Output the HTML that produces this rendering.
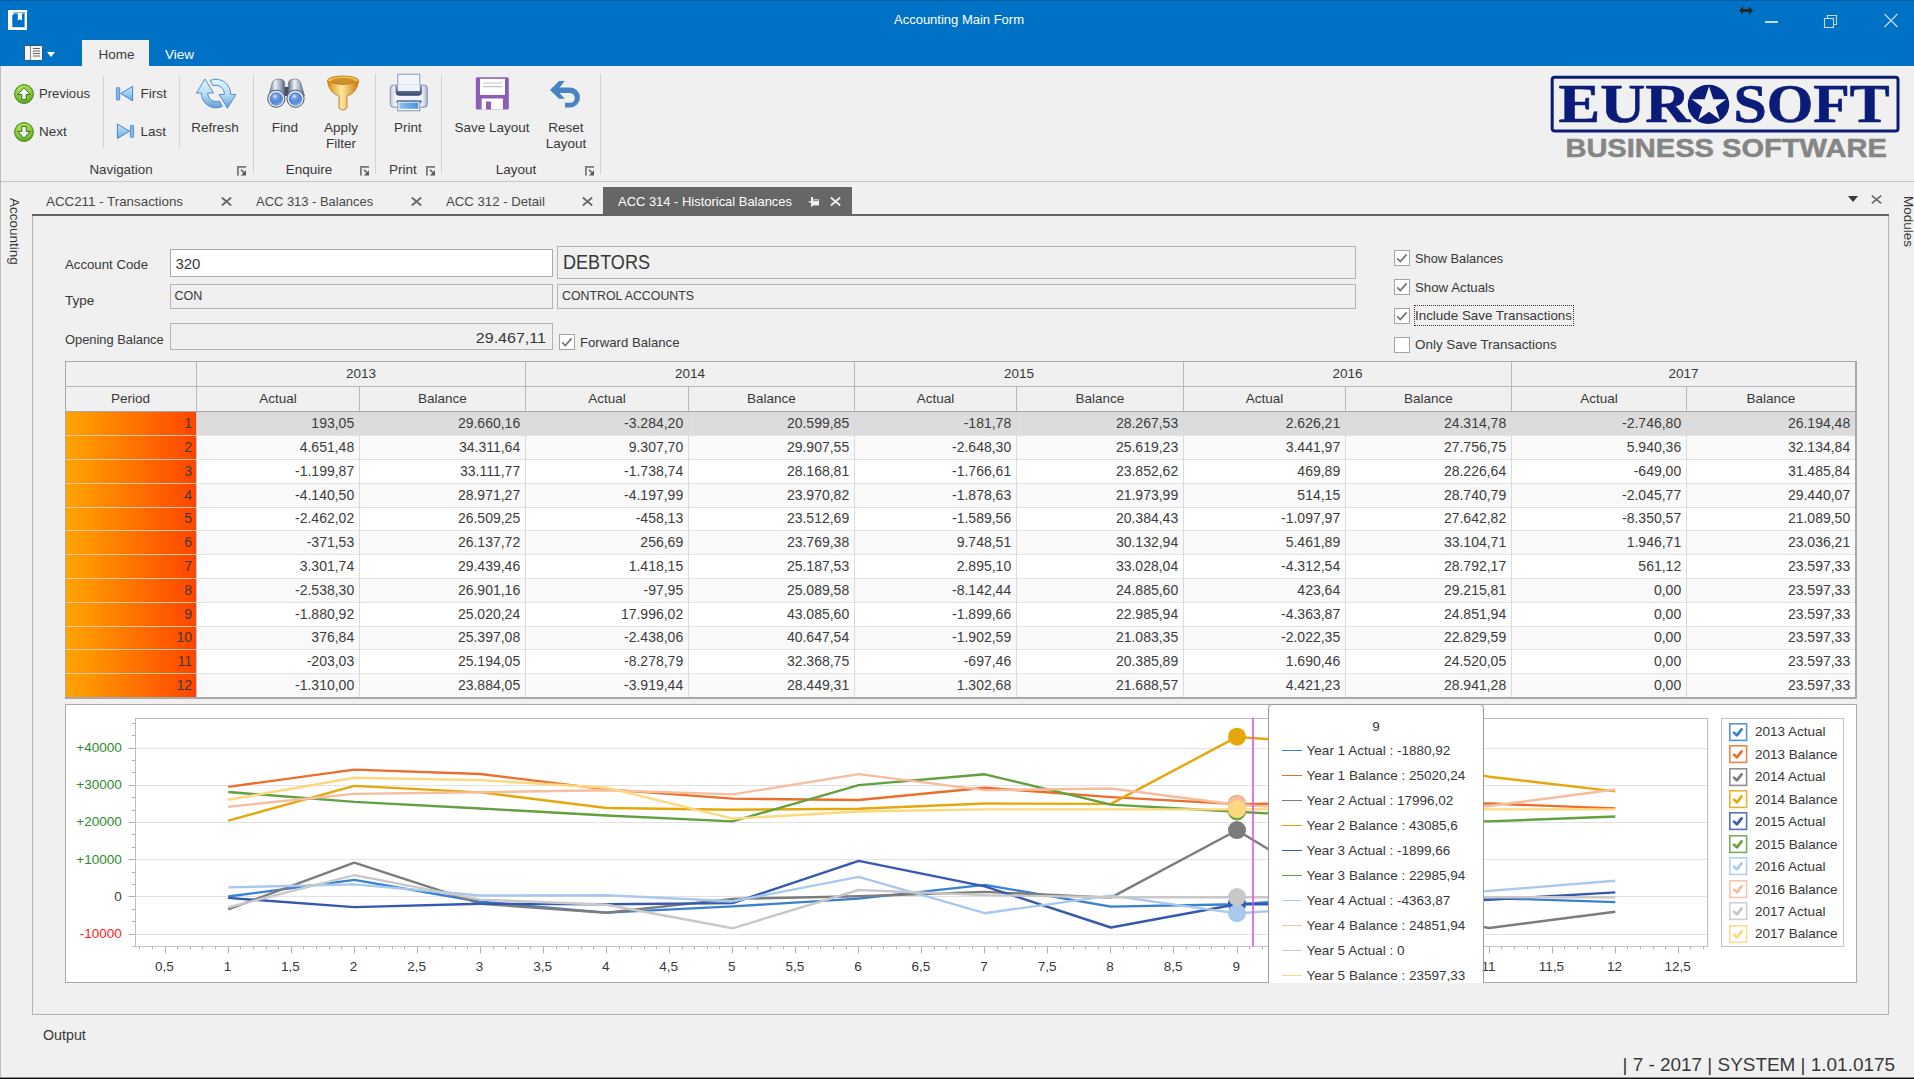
<!DOCTYPE html>
<html><head><meta charset="utf-8"><style>
html,body{margin:0;padding:0;width:1914px;height:1079px;overflow:hidden;background:#f0f0f0;font-family:"Liberation Sans", sans-serif;}
.t{position:absolute;white-space:nowrap;}
svg{overflow:visible}
</style></head><body>
<div style="position:absolute;left:0px;top:0px;width:1914px;height:66px;background:#0072c6"></div>
<div style="position:absolute;left:0px;top:0px;width:1914px;height:1px;background:#005ea6"></div>
<svg style="position:absolute;left:0px;top:0px" width="40" height="40" viewBox="0 0 40 40">
<rect x="8" y="10" width="19.2" height="2.2" fill="#fff"/>
<rect x="8" y="10" width="4.3" height="20" fill="#fff"/>
<rect x="24.6" y="10" width="2.4" height="20" fill="#fff"/>
<rect x="8" y="27.2" width="19" height="2.8" fill="#fff"/>
<rect x="12.3" y="12.2" width="12.3" height="1.7" fill="#8dbde8"/>
<rect x="10" y="12.2" width="3.5" height="2.6" fill="#fff"/>
<path d="M17.8 13 H22 V20.6 L19.9 19.3 L17.8 20.6 Z" fill="#fff"/>
</svg>
<div class="t" style="left:758.80px;top:13.17px;width:400px;font-size:13.5px;line-height:13.5px;color:#ffffff;text-align:center;transform:scaleX(0.9625);transform-origin:center center;">Accounting Main Form</div>
<svg style="position:absolute;left:1738px;top:5px" width="16" height="11" viewBox="0 0 16 11">
<path d="M1 5.5 L5 1.5 V4 H11 V1.5 L15 5.5 L11 9.5 V7 H5 V9.5 Z" fill="#262626"/></svg>
<div style="position:absolute;left:1765px;top:21px;width:13px;height:1.5px;background:#c6d7ea"></div>
<svg style="position:absolute;left:1823px;top:14px" width="16" height="15" viewBox="0 0 16 15">
<rect x="1.5" y="4.5" width="9" height="9" fill="none" stroke="#c6d7ea" stroke-width="1.1"/>
<path d="M4.5 4.5 V1.5 H13.5 V10.5 H10.5" fill="none" stroke="#c6d7ea" stroke-width="1.1"/></svg>
<svg style="position:absolute;left:1883px;top:13px" width="16" height="15" viewBox="0 0 16 15">
<path d="M1.5 1 L14.5 14 M14.5 1 L1.5 14" stroke="#c6d7ea" stroke-width="1.2"/></svg>
<svg style="position:absolute;left:23px;top:44px" width="34" height="18" viewBox="0 0 34 18">
<rect x="1.5" y="1.5" width="18" height="15" rx="1" fill="#f4f4f4" stroke="#1f3f66" stroke-width="0.8"/>
<line x1="7.5" y1="2" x2="7.5" y2="16" stroke="#888" stroke-width="1"/>
<path d="M10 4.5 H17 M10 7 H17 M10 9.5 H17 M10 12 H17" stroke="#666" stroke-width="1"/>
<path d="M24 8 L32 8 L28 13 Z" fill="#ffffff"/></svg>
<div style="position:absolute;left:82px;top:40px;width:67px;height:26px;background:#f0f0f0"></div>
<div class="t" style="left:98.40px;top:47.87px;width:400px;font-size:13.5px;line-height:13.5px;color:#3c3c3c;text-align:left;">Home</div>
<div class="t" style="left:165.00px;top:47.87px;width:400px;font-size:13.5px;line-height:13.5px;color:#ffffff;text-align:left;">View</div>
<div style="position:absolute;left:0px;top:66px;width:1914px;height:116px;background:#f0f0f0"></div>
<div style="position:absolute;left:0px;top:181px;width:1914px;height:1px;background:#c6c6c6"></div>
<div style="position:absolute;left:0px;top:66px;width:1px;height:1013px;background:#bdbdbd"></div>
<div style="position:absolute;left:103px;top:76px;width:1px;height:72px;background:#d4d4d4"></div>
<div style="position:absolute;left:179px;top:76px;width:1px;height:72px;background:#d4d4d4"></div>
<div style="position:absolute;left:253px;top:74px;width:1px;height:100px;background:#d4d4d4"></div>
<div style="position:absolute;left:375px;top:74px;width:1px;height:100px;background:#d4d4d4"></div>
<div style="position:absolute;left:441px;top:74px;width:1px;height:100px;background:#d4d4d4"></div>
<div style="position:absolute;left:600px;top:74px;width:1px;height:100px;background:#d4d4d4"></div>
<svg style="position:absolute;left:14px;top:84px" width="20" height="20" viewBox="0 0 20 20">
<defs><radialGradient id="gg1484" cx="45%" cy="30%" r="75%"><stop offset="0" stop-color="#c0ea62"/><stop offset="0.6" stop-color="#86c83a"/><stop offset="1" stop-color="#4e9a1c"/></radialGradient></defs>
<circle cx="10" cy="10" r="9.4" fill="url(#gg1484)" stroke="#3f8a18" stroke-width="1"/>
<path d="M10 3.6 L16.2 10.6 H12.3 V15.6 H7.7 V10.6 H3.8 Z" fill="#f2f6fb" stroke="#2f7010" stroke-width="1" stroke-linejoin="round"/></svg>
<svg style="position:absolute;left:14px;top:122px" width="20" height="20" viewBox="0 0 20 20">
<defs><radialGradient id="gg14122" cx="45%" cy="30%" r="75%"><stop offset="0" stop-color="#c0ea62"/><stop offset="0.6" stop-color="#86c83a"/><stop offset="1" stop-color="#4e9a1c"/></radialGradient></defs>
<circle cx="10" cy="10" r="9.4" fill="url(#gg14122)" stroke="#3f8a18" stroke-width="1"/>
<path d="M10 16.4 L16.2 9.4 H12.3 V4.4 H7.7 V9.4 H3.8 Z" fill="#f2f6fb" stroke="#2f7010" stroke-width="1" stroke-linejoin="round"/></svg>
<div class="t" style="left:39.00px;top:87.17px;width:400px;font-size:13.5px;line-height:13.5px;color:#383838;text-align:left;transform:scaleX(0.9709);transform-origin:left center;">Previous</div>
<div class="t" style="left:39.00px;top:124.57px;width:400px;font-size:13.5px;line-height:13.5px;color:#383838;text-align:left;">Next</div>
<svg style="position:absolute;left:110px;top:80px" width="30" height="64" viewBox="110 80 30 64">
<defs><linearGradient id="fl" x1="0" y1="0" x2="0" y2="1"><stop offset="0" stop-color="#c8e6fa"/><stop offset="1" stop-color="#6aaee8"/></linearGradient></defs>
<rect x="116.4" y="87.6" width="3.3" height="12.4" rx="0.8" fill="#7ab8ee" stroke="#3d78c0" stroke-width="0.7"/>
<path d="M132.6 86.3 V100.8 L120.6 93.5 Z" fill="url(#fl)" stroke="#3d78c0" stroke-width="0.9" stroke-linejoin="round"/>
<rect x="130.3" y="125.3" width="3.3" height="12.1" rx="0.8" fill="#7ab8ee" stroke="#3d78c0" stroke-width="0.7"/>
<path d="M117.4 124 V138.4 L129.5 131.2 Z" fill="url(#fl)" stroke="#3d78c0" stroke-width="0.9" stroke-linejoin="round"/>
</svg>
<div class="t" style="left:140.60px;top:87.17px;width:400px;font-size:13.5px;line-height:13.5px;color:#383838;text-align:left;">First</div>
<div class="t" style="left:140.60px;top:124.57px;width:400px;font-size:13.5px;line-height:13.5px;color:#383838;text-align:left;">Last</div>
<svg style="position:absolute;left:190px;top:72px" width="52" height="42" viewBox="0 0 52 42">
<defs><linearGradient id="rg" x1="0" y1="0" x2="0" y2="1"><stop offset="0" stop-color="#e2f6fc"/><stop offset="0.55" stop-color="#b4dcf2"/><stop offset="1" stop-color="#5d9fdc"/></linearGradient></defs>
<path d="M15 7 L23.5 21 L17.8 21 A8.4 8.4 0 0 0 29.3 29 L32.3 34.4 A14.7 14.7 0 0 1 11.3 21 L6.4 21 Z" fill="url(#rg)" stroke="#4a80c4" stroke-width="0.9" stroke-linejoin="round"/>
<path d="M20.2 8.4 A14.7 14.7 0 0 1 40.6 22.4 L45.9 22.6 L37.4 36.2 L29.2 22.6 L34.3 22.4 A8.4 8.4 0 0 0 23 13.8 Z" fill="url(#rg)" stroke="#4a80c4" stroke-width="0.9" stroke-linejoin="round"/>
</svg>
<div class="t" style="left:165.30px;top:121.17px;width:100px;font-size:13.5px;line-height:13.5px;color:#383838;text-align:center;transform:scaleX(1.0046);transform-origin:center center;">Refresh</div>
<div class="t" style="left:61.30px;top:163.27px;width:120px;font-size:13.5px;line-height:13.5px;color:#383838;text-align:center;transform:scaleX(0.9906);transform-origin:center center;">Navigation</div>
<svg style="position:absolute;left:237px;top:166px" width="10" height="10" viewBox="0 0 10 10">
<rect x="0" y="0" width="9" height="1.8" fill="#7a7a7a"/><rect x="0" y="0" width="1.8" height="9.6" fill="#7a7a7a"/>
<path d="M4 3.7 L6.8 6.5" stroke="#5a5a5a" stroke-width="1.6"/>
<path d="M9 4.2 V9.5 H3.8 Z" fill="#5a5a5a"/></svg>
<svg style="position:absolute;left:360px;top:166px" width="10" height="10" viewBox="0 0 10 10">
<rect x="0" y="0" width="9" height="1.8" fill="#7a7a7a"/><rect x="0" y="0" width="1.8" height="9.6" fill="#7a7a7a"/>
<path d="M4 3.7 L6.8 6.5" stroke="#5a5a5a" stroke-width="1.6"/>
<path d="M9 4.2 V9.5 H3.8 Z" fill="#5a5a5a"/></svg>
<svg style="position:absolute;left:426px;top:166px" width="10" height="10" viewBox="0 0 10 10">
<rect x="0" y="0" width="9" height="1.8" fill="#7a7a7a"/><rect x="0" y="0" width="1.8" height="9.6" fill="#7a7a7a"/>
<path d="M4 3.7 L6.8 6.5" stroke="#5a5a5a" stroke-width="1.6"/>
<path d="M9 4.2 V9.5 H3.8 Z" fill="#5a5a5a"/></svg>
<svg style="position:absolute;left:585px;top:166px" width="10" height="10" viewBox="0 0 10 10">
<rect x="0" y="0" width="9" height="1.8" fill="#7a7a7a"/><rect x="0" y="0" width="1.8" height="9.6" fill="#7a7a7a"/>
<path d="M4 3.7 L6.8 6.5" stroke="#5a5a5a" stroke-width="1.6"/>
<path d="M9 4.2 V9.5 H3.8 Z" fill="#5a5a5a"/></svg>
<svg style="position:absolute;left:262px;top:72px" width="50" height="40" viewBox="0 0 50 40">
<defs><linearGradient id="bn" x1="0" y1="0" x2="1" y2="0"><stop offset="0" stop-color="#56647c"/><stop offset="0.4" stop-color="#eef2f7"/><stop offset="0.75" stop-color="#9aa6b8"/><stop offset="1" stop-color="#4d5a70"/></linearGradient>
<radialGradient id="lens" cx="40%" cy="30%" r="75%"><stop offset="0" stop-color="#f4f0ff"/><stop offset="0.25" stop-color="#7aa2e8"/><stop offset="0.7" stop-color="#4a86d8"/><stop offset="1" stop-color="#9ccfee"/></radialGradient></defs>
<rect x="22" y="15" width="5" height="9" fill="#3e4a62"/>
<path d="M6.5 24 L10.5 10 Q12 7 16.5 7 Q21.5 7 22.5 10 L23.2 24 Z" fill="url(#bn)" stroke="#5a667c" stroke-width="0.6"/>
<path d="M25.8 24 L26.5 10 Q27.5 7 32.5 7 Q37 7 38.5 10 L42.5 24 Z" fill="url(#bn)" stroke="#5a667c" stroke-width="0.6"/>
<circle cx="14.3" cy="26.7" r="8.6" fill="#dfe6ef" stroke="#4a5870" stroke-width="1"/>
<circle cx="14.3" cy="26.9" r="6.2" fill="url(#lens)" stroke="#3a5ea8" stroke-width="0.6"/>
<circle cx="33.5" cy="26.7" r="8.6" fill="#dfe6ef" stroke="#4a5870" stroke-width="1"/>
<circle cx="33.5" cy="26.9" r="6.2" fill="url(#lens)" stroke="#3a5ea8" stroke-width="0.6"/>
</svg>
<svg style="position:absolute;left:326px;top:75px" width="34" height="37" viewBox="0 0 34 37">
<defs><linearGradient id="fn" x1="0" y1="0" x2="1" y2="0"><stop offset="0" stop-color="#d88a10"/><stop offset="0.45" stop-color="#ffe9a0"/><stop offset="1" stop-color="#c87a08"/></linearGradient></defs>
<ellipse cx="17" cy="5.5" rx="15.5" ry="4.5" fill="#f6c04a" stroke="#b87010" stroke-width="0.8"/>
<path d="M1.5 6 Q3 18 13 21 L13 33 Q17 37 21 33 L21 21 Q31 18 32.5 6 Q17 13 1.5 6 Z" fill="url(#fn)" stroke="#b87010" stroke-width="0.8"/>
<ellipse cx="17" cy="6" rx="12" ry="3" fill="#a86a10" opacity="0.55"/></svg>
<div class="t" style="left:235.00px;top:121.37px;width:100px;font-size:13.5px;line-height:13.5px;color:#383838;text-align:center;">Find</div>
<div class="t" style="left:291.00px;top:121.37px;width:100px;font-size:13.5px;line-height:13.5px;color:#383838;text-align:center;">Apply</div>
<div class="t" style="left:291.00px;top:137.27px;width:100px;font-size:13.5px;line-height:13.5px;color:#383838;text-align:center;">Filter</div>
<div class="t" style="left:259.00px;top:163.27px;width:100px;font-size:13.5px;line-height:13.5px;color:#383838;text-align:center;">Enquire</div>
<svg style="position:absolute;left:388px;top:72px" width="42" height="41" viewBox="0 0 42 41">
<defs><linearGradient id="pr" x1="0" y1="0" x2="1" y2="0"><stop offset="0" stop-color="#c4cee0"/><stop offset="0.15" stop-color="#f4f7fc"/><stop offset="0.85" stop-color="#eef2f9"/><stop offset="1" stop-color="#aab6cc"/></linearGradient>
<linearGradient id="sl" x1="0" y1="0" x2="0" y2="1"><stop offset="0" stop-color="#8c9ab8"/><stop offset="1" stop-color="#36456a"/></linearGradient>
<linearGradient id="tr" x1="0" y1="0" x2="1" y2="0"><stop offset="0" stop-color="#8cc0ec"/><stop offset="1" stop-color="#4a94dc"/></linearGradient></defs>
<rect x="9.8" y="2.2" width="22" height="18" fill="#f2f5fb" stroke="#7f8fb4" stroke-width="0.9"/>
<rect x="2.3" y="13.2" width="37" height="22" rx="3" fill="url(#pr)" stroke="#7584a8" stroke-width="0.9"/>
<path d="M7.5 13.5 H34 V19.5 Q34 23.7 30 23.7 H11.5 Q7.5 23.7 7.5 19.5 Z" fill="url(#sl)"/>
<rect x="9.8" y="12.5" width="22" height="6.5" fill="#eef2f9"/>
<rect x="8.5" y="28.2" width="25" height="3" rx="1" fill="#5d6c92"/>
<rect x="9.8" y="29.5" width="22" height="9.3" fill="#ffffff" stroke="#7584a8" stroke-width="0.9"/>
<rect x="11.3" y="30.5" width="19" height="6.3" fill="url(#tr)"/>
</svg>
<div class="t" style="left:358.00px;top:121.37px;width:100px;font-size:13.5px;line-height:13.5px;color:#383838;text-align:center;">Print</div>
<div class="t" style="left:353.00px;top:163.27px;width:100px;font-size:13.5px;line-height:13.5px;color:#383838;text-align:center;">Print</div>
<svg style="position:absolute;left:475px;top:77px" width="35" height="34" viewBox="0 0 35 34">
<rect x="0.8" y="0.3" width="33" height="32.2" rx="1.5" fill="#8c5cb6"/>
<rect x="5" y="1.8" width="25" height="16.1" fill="#ffffff"/>
<path d="M8 6 H27 M8 9.6 H27" stroke="#c4c4c4" stroke-width="1.1"/>
<rect x="6.6" y="21.5" width="21.3" height="11" fill="#ffffff"/>
<rect x="11" y="24.5" width="5" height="8" fill="#8c5cb6"/>
</svg>
<svg style="position:absolute;left:540px;top:70px" width="50" height="45" viewBox="540 70 50 45">
<path d="M559 81 H564.8 L559.6 87.5 H570 A10 10 0 0 1 570 107.5 H565 V102.75 H570 A5.25 4.9 0 0 0 570 93 H559.6 L564.8 98.75 H559 L550 90 Z" fill="#4a83c2"/>
</svg>
<div class="t" style="left:432.00px;top:121.37px;width:120px;font-size:13.5px;line-height:13.5px;color:#383838;text-align:center;">Save Layout</div>
<div class="t" style="left:516.00px;top:121.37px;width:100px;font-size:13.5px;line-height:13.5px;color:#383838;text-align:center;">Reset</div>
<div class="t" style="left:516.00px;top:137.27px;width:100px;font-size:13.5px;line-height:13.5px;color:#383838;text-align:center;">Layout</div>
<div class="t" style="left:466.00px;top:163.27px;width:100px;font-size:13.5px;line-height:13.5px;color:#383838;text-align:center;">Layout</div>
<svg style="position:absolute;left:1540px;top:66px" width="374" height="110" viewBox="1540 66 374 110">
<rect x="1552.2" y="77.3" width="345.8" height="53.6" rx="2.5" fill="none" stroke="#0b1c78" stroke-width="3"/>
<text x="1558.6" y="122.4" font-family="Liberation Serif" font-weight="bold" font-size="54" fill="#0b1c78" stroke="#0b1c78" stroke-width="0.6" textLength="131.8" lengthAdjust="spacingAndGlyphs">EUR</text>
<ellipse cx="1708.5" cy="104.4" rx="20.7" ry="19.6" fill="#0b1c78"/>
<path d="M1709 86.5 L1713.3 99.2 L1726.2 99.2 L1715.8 106.9 L1719.7 119.6 L1709 111.8 L1698.3 119.6 L1702.2 106.9 L1691.8 99.2 L1704.7 99.2 Z" fill="#f0f0f0"/>
<text x="1733.4" y="122.4" font-family="Liberation Serif" font-weight="bold" font-size="54" fill="#0b1c78" stroke="#0b1c78" stroke-width="0.6" textLength="156.3" lengthAdjust="spacingAndGlyphs">SOFT</text>
<text x="1565.4" y="156.9" font-family="Liberation Sans" font-weight="bold" font-size="26" fill="#858585" stroke="#858585" stroke-width="0.5" textLength="321.4" lengthAdjust="spacingAndGlyphs">BUSINESS SOFTWARE</text>
</svg>
<div class="t" style="left:5.5px;top:197.5px;font-size:13.5px;line-height:16px;color:#383838;writing-mode:vertical-rl;">Accounting</div>
<div class="t" style="left:1900px;top:196px;font-size:13.5px;line-height:16px;color:#383838;writing-mode:vertical-rl;">Modules</div>
<div class="t" style="left:46.00px;top:194.57px;width:400px;font-size:13.5px;line-height:13.5px;color:#484848;text-align:left;transform:scaleX(0.9887);transform-origin:left center;">ACC211 - Transactions</div>
<div class="t" style="left:256.00px;top:194.57px;width:400px;font-size:13.5px;line-height:13.5px;color:#484848;text-align:left;transform:scaleX(0.9582);transform-origin:left center;">ACC 313 - Balances</div>
<div class="t" style="left:445.50px;top:194.57px;width:400px;font-size:13.5px;line-height:13.5px;color:#484848;text-align:left;transform:scaleX(0.9763);transform-origin:left center;">ACC 312 - Detail</div>
<svg style="position:absolute;left:221px;top:197px" width="11" height="9" viewBox="0 0 11 9">
<path d="M0.8 0.6 L10.2 8.4 M10.2 0.6 L0.8 8.4" stroke="#6a6a6a" stroke-width="1.9"/></svg>
<svg style="position:absolute;left:411px;top:197px" width="11" height="9" viewBox="0 0 11 9">
<path d="M0.8 0.6 L10.2 8.4 M10.2 0.6 L0.8 8.4" stroke="#6a6a6a" stroke-width="1.9"/></svg>
<svg style="position:absolute;left:582px;top:197px" width="11" height="9" viewBox="0 0 11 9">
<path d="M0.8 0.6 L10.2 8.4 M10.2 0.6 L0.8 8.4" stroke="#6a6a6a" stroke-width="1.9"/></svg>
<div style="position:absolute;left:603px;top:187px;width:249px;height:27px;background:#666666"></div>
<div class="t" style="left:617.80px;top:194.57px;width:400px;font-size:13.5px;line-height:13.5px;color:#ffffff;text-align:left;transform:scaleX(0.9583);transform-origin:left center;">ACC 314 - Historical Balances</div>
<svg style="position:absolute;left:808px;top:196px" width="12" height="12" viewBox="808 196 12 12">
<rect x="808.8" y="201.1" width="2.4" height="1.4" fill="#f0f0f0"/>
<rect x="811" y="197" width="2" height="9.5" fill="#f0f0f0"/>
<rect x="813" y="199.4" width="6" height="6" fill="#f0f0f0"/>
<rect x="813.3" y="200.2" width="5" height="0.9" fill="#777"/>
</svg>
<svg style="position:absolute;left:830px;top:197px" width="11" height="9" viewBox="0 0 11 9">
<path d="M0.8 0.6 L10.2 8.4 M10.2 0.6 L0.8 8.4" stroke="#ececec" stroke-width="1.9"/></svg>
<div style="position:absolute;left:32px;top:214px;width:1857px;height:2px;background:#646464"></div>
<svg style="position:absolute;left:1848px;top:196px" width="10" height="6" viewBox="0 0 10 6"><path d="M0 0 H10 L5 6 Z" fill="#3a3a3a"/></svg>
<svg style="position:absolute;left:1871px;top:195px" width="11" height="9" viewBox="0 0 11 9">
<path d="M0.8 0.6 L10.2 8.4 M10.2 0.6 L0.8 8.4" stroke="#6a6a6a" stroke-width="1.7"/></svg>
<div style="position:absolute;left:32px;top:216px;width:1857px;height:799px;box-sizing:border-box;border:1px solid #b4b4b4;border-top:none;background:#f0f0f0"></div>
<div class="t" style="left:64.90px;top:258.37px;width:400px;font-size:13.5px;line-height:13.5px;color:#383838;text-align:left;transform:scaleX(0.9786);transform-origin:left center;">Account Code</div>
<div class="t" style="left:64.90px;top:294.37px;width:400px;font-size:13.5px;line-height:13.5px;color:#383838;text-align:left;">Type</div>
<div class="t" style="left:64.90px;top:332.57px;width:400px;font-size:13.5px;line-height:13.5px;color:#383838;text-align:left;transform:scaleX(0.9529);transform-origin:left center;">Opening Balance</div>
<div style="position:absolute;left:170px;top:249px;width:383px;height:28px;box-sizing:border-box;border:1px solid #ababab;background:#ffffff"></div>
<div class="t" style="left:175.40px;top:256.30px;width:400px;font-size:15px;line-height:15px;color:#383838;text-align:left;">320</div>
<div style="position:absolute;left:170px;top:284px;width:383px;height:25px;box-sizing:border-box;border:1px solid #b4b4b4;background:#f0f0f0"></div>
<div class="t" style="left:174.60px;top:290.42px;width:400px;font-size:12.5px;line-height:12.5px;color:#383838;text-align:left;">CON</div>
<div style="position:absolute;left:170px;top:323px;width:383px;height:27px;box-sizing:border-box;border:1px solid #b4b4b4;background:#f0f0f0"></div>
<div class="t" style="left:346.30px;top:330.00px;width:200px;font-size:15px;line-height:15px;color:#383838;text-align:right;transform:scaleX(1.07);transform-origin:right center;">29.467,11</div>
<div style="position:absolute;left:557px;top:246px;width:799px;height:33px;box-sizing:border-box;border:1px solid #b4b4b4;background:#f0f0f0"></div>
<div class="t" style="left:563.00px;top:252.45px;width:400px;font-size:20.5px;line-height:20.5px;color:#383838;text-align:left;transform:scaleX(0.8812);transform-origin:left center;">DEBTORS</div>
<div style="position:absolute;left:557px;top:284px;width:799px;height:25px;box-sizing:border-box;border:1px solid #b4b4b4;background:#f0f0f0"></div>
<div class="t" style="left:562.00px;top:289.96px;width:400px;font-size:12.8px;line-height:12.8px;color:#383838;text-align:left;transform:scaleX(0.9653);transform-origin:left center;">CONTROL ACCOUNTS</div>
<svg style="position:absolute;left:559px;top:334px" width="16" height="16" viewBox="0 0 16 16">
<rect x="0.5" y="0.5" width="15" height="15" fill="#ffffff" stroke="#a4a4a4" stroke-width="1"/><path d="M3.2 8.2 L6.3 11.6 L12.6 4.4" fill="none" stroke="#6e6e6e" stroke-width="1.6"/></svg>
<div class="t" style="left:579.50px;top:335.97px;width:400px;font-size:13.5px;line-height:13.5px;color:#383838;text-align:left;transform:scaleX(0.9749);transform-origin:left center;">Forward Balance</div>
<svg style="position:absolute;left:1394px;top:250px" width="16" height="16" viewBox="0 0 16 16">
<rect x="0.5" y="0.5" width="15" height="15" fill="#ffffff" stroke="#a4a4a4" stroke-width="1"/><path d="M3.2 8.2 L6.3 11.6 L12.6 4.4" fill="none" stroke="#6e6e6e" stroke-width="1.6"/></svg>
<div class="t" style="left:1414.60px;top:251.87px;width:400px;font-size:13.5px;line-height:13.5px;color:#383838;text-align:left;transform:scaleX(0.9478);transform-origin:left center;">Show Balances</div>
<svg style="position:absolute;left:1394px;top:279px" width="16" height="16" viewBox="0 0 16 16">
<rect x="0.5" y="0.5" width="15" height="15" fill="#ffffff" stroke="#a4a4a4" stroke-width="1"/><path d="M3.2 8.2 L6.3 11.6 L12.6 4.4" fill="none" stroke="#6e6e6e" stroke-width="1.6"/></svg>
<div class="t" style="left:1414.60px;top:280.67px;width:400px;font-size:13.5px;line-height:13.5px;color:#383838;text-align:left;transform:scaleX(0.9834);transform-origin:left center;">Show Actuals</div>
<svg style="position:absolute;left:1394px;top:308px" width="16" height="16" viewBox="0 0 16 16">
<rect x="0.5" y="0.5" width="15" height="15" fill="#ffffff" stroke="#a4a4a4" stroke-width="1"/><path d="M3.2 8.2 L6.3 11.6 L12.6 4.4" fill="none" stroke="#6e6e6e" stroke-width="1.6"/></svg>
<div class="t" style="left:1414.60px;top:309.47px;width:400px;font-size:13.5px;line-height:13.5px;color:#383838;text-align:left;transform:scaleX(0.9915);transform-origin:left center;">Include Save Transactions</div>
<svg style="position:absolute;left:1394px;top:337px" width="16" height="16" viewBox="0 0 16 16">
<rect x="0.5" y="0.5" width="15" height="15" fill="#ffffff" stroke="#a4a4a4" stroke-width="1"/></svg>
<div class="t" style="left:1414.60px;top:338.27px;width:400px;font-size:13.5px;line-height:13.5px;color:#383838;text-align:left;transform:scaleX(0.9938);transform-origin:left center;">Only Save Transactions</div>
<div style="position:absolute;left:1414px;top:305px;width:160px;height:21px;box-sizing:border-box;border:1px dotted #333"></div>
<div style="position:absolute;left:65px;top:361px;width:1792px;height:338px;background:#ffffff"></div>
<div style="position:absolute;left:66px;top:362px;width:1790px;height:50px;background:#f0f0f0"></div>
<div style="position:absolute;left:196px;top:412px;width:1660px;height:23px;background:#dcdcdc"></div>
<div style="position:absolute;left:66px;top:412px;width:130px;height:23px;background:linear-gradient(to right,#ffa500,#ff4500)"></div>
<div class="t" style="left:92.00px;top:416.35px;width:100px;font-size:14px;line-height:14px;color:#3c3c3c;text-align:right;">1</div>
<div class="t" style="left:194.20px;top:416.35px;width:160px;font-size:14px;line-height:14px;color:#3c3c3c;text-align:right;">193,05</div>
<div class="t" style="left:360.20px;top:416.35px;width:160px;font-size:14px;line-height:14px;color:#3c3c3c;text-align:right;">29.660,16</div>
<div class="t" style="left:523.20px;top:416.35px;width:160px;font-size:14px;line-height:14px;color:#3c3c3c;text-align:right;">-3.284,20</div>
<div class="t" style="left:689.20px;top:416.35px;width:160px;font-size:14px;line-height:14px;color:#3c3c3c;text-align:right;">20.599,85</div>
<div class="t" style="left:851.20px;top:416.35px;width:160px;font-size:14px;line-height:14px;color:#3c3c3c;text-align:right;">-181,78</div>
<div class="t" style="left:1018.20px;top:416.35px;width:160px;font-size:14px;line-height:14px;color:#3c3c3c;text-align:right;">28.267,53</div>
<div class="t" style="left:1180.20px;top:416.35px;width:160px;font-size:14px;line-height:14px;color:#3c3c3c;text-align:right;">2.626,21</div>
<div class="t" style="left:1346.20px;top:416.35px;width:160px;font-size:14px;line-height:14px;color:#3c3c3c;text-align:right;">24.314,78</div>
<div class="t" style="left:1521.20px;top:416.35px;width:160px;font-size:14px;line-height:14px;color:#3c3c3c;text-align:right;">-2.746,80</div>
<div class="t" style="left:1690.20px;top:416.35px;width:160px;font-size:14px;line-height:14px;color:#3c3c3c;text-align:right;">26.194,48</div>
<div style="position:absolute;left:196px;top:435px;width:1660px;height:24px;background:#f9f9f9"></div>
<div style="position:absolute;left:66px;top:435px;width:130px;height:24px;background:linear-gradient(to right,#ffa500,#ff4500)"></div>
<div class="t" style="left:92.00px;top:440.12px;width:100px;font-size:14px;line-height:14px;color:#3c3c3c;text-align:right;">2</div>
<div class="t" style="left:194.20px;top:440.12px;width:160px;font-size:14px;line-height:14px;color:#3c3c3c;text-align:right;">4.651,48</div>
<div class="t" style="left:360.20px;top:440.12px;width:160px;font-size:14px;line-height:14px;color:#3c3c3c;text-align:right;">34.311,64</div>
<div class="t" style="left:523.20px;top:440.12px;width:160px;font-size:14px;line-height:14px;color:#3c3c3c;text-align:right;">9.307,70</div>
<div class="t" style="left:689.20px;top:440.12px;width:160px;font-size:14px;line-height:14px;color:#3c3c3c;text-align:right;">29.907,55</div>
<div class="t" style="left:851.20px;top:440.12px;width:160px;font-size:14px;line-height:14px;color:#3c3c3c;text-align:right;">-2.648,30</div>
<div class="t" style="left:1018.20px;top:440.12px;width:160px;font-size:14px;line-height:14px;color:#3c3c3c;text-align:right;">25.619,23</div>
<div class="t" style="left:1180.20px;top:440.12px;width:160px;font-size:14px;line-height:14px;color:#3c3c3c;text-align:right;">3.441,97</div>
<div class="t" style="left:1346.20px;top:440.12px;width:160px;font-size:14px;line-height:14px;color:#3c3c3c;text-align:right;">27.756,75</div>
<div class="t" style="left:1521.20px;top:440.12px;width:160px;font-size:14px;line-height:14px;color:#3c3c3c;text-align:right;">5.940,36</div>
<div class="t" style="left:1690.20px;top:440.12px;width:160px;font-size:14px;line-height:14px;color:#3c3c3c;text-align:right;">32.134,84</div>
<div style="position:absolute;left:196px;top:459px;width:1660px;height:24px;background:#ffffff"></div>
<div style="position:absolute;left:66px;top:459px;width:130px;height:24px;background:linear-gradient(to right,#ffa500,#ff4500)"></div>
<div class="t" style="left:92.00px;top:463.89px;width:100px;font-size:14px;line-height:14px;color:#3c3c3c;text-align:right;">3</div>
<div class="t" style="left:194.20px;top:463.89px;width:160px;font-size:14px;line-height:14px;color:#3c3c3c;text-align:right;">-1.199,87</div>
<div class="t" style="left:360.20px;top:463.89px;width:160px;font-size:14px;line-height:14px;color:#3c3c3c;text-align:right;">33.111,77</div>
<div class="t" style="left:523.20px;top:463.89px;width:160px;font-size:14px;line-height:14px;color:#3c3c3c;text-align:right;">-1.738,74</div>
<div class="t" style="left:689.20px;top:463.89px;width:160px;font-size:14px;line-height:14px;color:#3c3c3c;text-align:right;">28.168,81</div>
<div class="t" style="left:851.20px;top:463.89px;width:160px;font-size:14px;line-height:14px;color:#3c3c3c;text-align:right;">-1.766,61</div>
<div class="t" style="left:1018.20px;top:463.89px;width:160px;font-size:14px;line-height:14px;color:#3c3c3c;text-align:right;">23.852,62</div>
<div class="t" style="left:1180.20px;top:463.89px;width:160px;font-size:14px;line-height:14px;color:#3c3c3c;text-align:right;">469,89</div>
<div class="t" style="left:1346.20px;top:463.89px;width:160px;font-size:14px;line-height:14px;color:#3c3c3c;text-align:right;">28.226,64</div>
<div class="t" style="left:1521.20px;top:463.89px;width:160px;font-size:14px;line-height:14px;color:#3c3c3c;text-align:right;">-649,00</div>
<div class="t" style="left:1690.20px;top:463.89px;width:160px;font-size:14px;line-height:14px;color:#3c3c3c;text-align:right;">31.485,84</div>
<div style="position:absolute;left:196px;top:483px;width:1660px;height:24px;background:#f9f9f9"></div>
<div style="position:absolute;left:66px;top:483px;width:130px;height:24px;background:linear-gradient(to right,#ffa500,#ff4500)"></div>
<div class="t" style="left:92.00px;top:487.66px;width:100px;font-size:14px;line-height:14px;color:#3c3c3c;text-align:right;">4</div>
<div class="t" style="left:194.20px;top:487.66px;width:160px;font-size:14px;line-height:14px;color:#3c3c3c;text-align:right;">-4.140,50</div>
<div class="t" style="left:360.20px;top:487.66px;width:160px;font-size:14px;line-height:14px;color:#3c3c3c;text-align:right;">28.971,27</div>
<div class="t" style="left:523.20px;top:487.66px;width:160px;font-size:14px;line-height:14px;color:#3c3c3c;text-align:right;">-4.197,99</div>
<div class="t" style="left:689.20px;top:487.66px;width:160px;font-size:14px;line-height:14px;color:#3c3c3c;text-align:right;">23.970,82</div>
<div class="t" style="left:851.20px;top:487.66px;width:160px;font-size:14px;line-height:14px;color:#3c3c3c;text-align:right;">-1.878,63</div>
<div class="t" style="left:1018.20px;top:487.66px;width:160px;font-size:14px;line-height:14px;color:#3c3c3c;text-align:right;">21.973,99</div>
<div class="t" style="left:1180.20px;top:487.66px;width:160px;font-size:14px;line-height:14px;color:#3c3c3c;text-align:right;">514,15</div>
<div class="t" style="left:1346.20px;top:487.66px;width:160px;font-size:14px;line-height:14px;color:#3c3c3c;text-align:right;">28.740,79</div>
<div class="t" style="left:1521.20px;top:487.66px;width:160px;font-size:14px;line-height:14px;color:#3c3c3c;text-align:right;">-2.045,77</div>
<div class="t" style="left:1690.20px;top:487.66px;width:160px;font-size:14px;line-height:14px;color:#3c3c3c;text-align:right;">29.440,07</div>
<div style="position:absolute;left:196px;top:507px;width:1660px;height:23px;background:#ffffff"></div>
<div style="position:absolute;left:66px;top:507px;width:130px;height:23px;background:linear-gradient(to right,#ffa500,#ff4500)"></div>
<div class="t" style="left:92.00px;top:511.43px;width:100px;font-size:14px;line-height:14px;color:#3c3c3c;text-align:right;">5</div>
<div class="t" style="left:194.20px;top:511.43px;width:160px;font-size:14px;line-height:14px;color:#3c3c3c;text-align:right;">-2.462,02</div>
<div class="t" style="left:360.20px;top:511.43px;width:160px;font-size:14px;line-height:14px;color:#3c3c3c;text-align:right;">26.509,25</div>
<div class="t" style="left:523.20px;top:511.43px;width:160px;font-size:14px;line-height:14px;color:#3c3c3c;text-align:right;">-458,13</div>
<div class="t" style="left:689.20px;top:511.43px;width:160px;font-size:14px;line-height:14px;color:#3c3c3c;text-align:right;">23.512,69</div>
<div class="t" style="left:851.20px;top:511.43px;width:160px;font-size:14px;line-height:14px;color:#3c3c3c;text-align:right;">-1.589,56</div>
<div class="t" style="left:1018.20px;top:511.43px;width:160px;font-size:14px;line-height:14px;color:#3c3c3c;text-align:right;">20.384,43</div>
<div class="t" style="left:1180.20px;top:511.43px;width:160px;font-size:14px;line-height:14px;color:#3c3c3c;text-align:right;">-1.097,97</div>
<div class="t" style="left:1346.20px;top:511.43px;width:160px;font-size:14px;line-height:14px;color:#3c3c3c;text-align:right;">27.642,82</div>
<div class="t" style="left:1521.20px;top:511.43px;width:160px;font-size:14px;line-height:14px;color:#3c3c3c;text-align:right;">-8.350,57</div>
<div class="t" style="left:1690.20px;top:511.43px;width:160px;font-size:14px;line-height:14px;color:#3c3c3c;text-align:right;">21.089,50</div>
<div style="position:absolute;left:196px;top:530px;width:1660px;height:24px;background:#f9f9f9"></div>
<div style="position:absolute;left:66px;top:530px;width:130px;height:24px;background:linear-gradient(to right,#ffa500,#ff4500)"></div>
<div class="t" style="left:92.00px;top:535.20px;width:100px;font-size:14px;line-height:14px;color:#3c3c3c;text-align:right;">6</div>
<div class="t" style="left:194.20px;top:535.20px;width:160px;font-size:14px;line-height:14px;color:#3c3c3c;text-align:right;">-371,53</div>
<div class="t" style="left:360.20px;top:535.20px;width:160px;font-size:14px;line-height:14px;color:#3c3c3c;text-align:right;">26.137,72</div>
<div class="t" style="left:523.20px;top:535.20px;width:160px;font-size:14px;line-height:14px;color:#3c3c3c;text-align:right;">256,69</div>
<div class="t" style="left:689.20px;top:535.20px;width:160px;font-size:14px;line-height:14px;color:#3c3c3c;text-align:right;">23.769,38</div>
<div class="t" style="left:851.20px;top:535.20px;width:160px;font-size:14px;line-height:14px;color:#3c3c3c;text-align:right;">9.748,51</div>
<div class="t" style="left:1018.20px;top:535.20px;width:160px;font-size:14px;line-height:14px;color:#3c3c3c;text-align:right;">30.132,94</div>
<div class="t" style="left:1180.20px;top:535.20px;width:160px;font-size:14px;line-height:14px;color:#3c3c3c;text-align:right;">5.461,89</div>
<div class="t" style="left:1346.20px;top:535.20px;width:160px;font-size:14px;line-height:14px;color:#3c3c3c;text-align:right;">33.104,71</div>
<div class="t" style="left:1521.20px;top:535.20px;width:160px;font-size:14px;line-height:14px;color:#3c3c3c;text-align:right;">1.946,71</div>
<div class="t" style="left:1690.20px;top:535.20px;width:160px;font-size:14px;line-height:14px;color:#3c3c3c;text-align:right;">23.036,21</div>
<div style="position:absolute;left:196px;top:554px;width:1660px;height:24px;background:#ffffff"></div>
<div style="position:absolute;left:66px;top:554px;width:130px;height:24px;background:linear-gradient(to right,#ffa500,#ff4500)"></div>
<div class="t" style="left:92.00px;top:558.97px;width:100px;font-size:14px;line-height:14px;color:#3c3c3c;text-align:right;">7</div>
<div class="t" style="left:194.20px;top:558.97px;width:160px;font-size:14px;line-height:14px;color:#3c3c3c;text-align:right;">3.301,74</div>
<div class="t" style="left:360.20px;top:558.97px;width:160px;font-size:14px;line-height:14px;color:#3c3c3c;text-align:right;">29.439,46</div>
<div class="t" style="left:523.20px;top:558.97px;width:160px;font-size:14px;line-height:14px;color:#3c3c3c;text-align:right;">1.418,15</div>
<div class="t" style="left:689.20px;top:558.97px;width:160px;font-size:14px;line-height:14px;color:#3c3c3c;text-align:right;">25.187,53</div>
<div class="t" style="left:851.20px;top:558.97px;width:160px;font-size:14px;line-height:14px;color:#3c3c3c;text-align:right;">2.895,10</div>
<div class="t" style="left:1018.20px;top:558.97px;width:160px;font-size:14px;line-height:14px;color:#3c3c3c;text-align:right;">33.028,04</div>
<div class="t" style="left:1180.20px;top:558.97px;width:160px;font-size:14px;line-height:14px;color:#3c3c3c;text-align:right;">-4.312,54</div>
<div class="t" style="left:1346.20px;top:558.97px;width:160px;font-size:14px;line-height:14px;color:#3c3c3c;text-align:right;">28.792,17</div>
<div class="t" style="left:1521.20px;top:558.97px;width:160px;font-size:14px;line-height:14px;color:#3c3c3c;text-align:right;">561,12</div>
<div class="t" style="left:1690.20px;top:558.97px;width:160px;font-size:14px;line-height:14px;color:#3c3c3c;text-align:right;">23.597,33</div>
<div style="position:absolute;left:196px;top:578px;width:1660px;height:24px;background:#f9f9f9"></div>
<div style="position:absolute;left:66px;top:578px;width:130px;height:24px;background:linear-gradient(to right,#ffa500,#ff4500)"></div>
<div class="t" style="left:92.00px;top:582.74px;width:100px;font-size:14px;line-height:14px;color:#3c3c3c;text-align:right;">8</div>
<div class="t" style="left:194.20px;top:582.74px;width:160px;font-size:14px;line-height:14px;color:#3c3c3c;text-align:right;">-2.538,30</div>
<div class="t" style="left:360.20px;top:582.74px;width:160px;font-size:14px;line-height:14px;color:#3c3c3c;text-align:right;">26.901,16</div>
<div class="t" style="left:523.20px;top:582.74px;width:160px;font-size:14px;line-height:14px;color:#3c3c3c;text-align:right;">-97,95</div>
<div class="t" style="left:689.20px;top:582.74px;width:160px;font-size:14px;line-height:14px;color:#3c3c3c;text-align:right;">25.089,58</div>
<div class="t" style="left:851.20px;top:582.74px;width:160px;font-size:14px;line-height:14px;color:#3c3c3c;text-align:right;">-8.142,44</div>
<div class="t" style="left:1018.20px;top:582.74px;width:160px;font-size:14px;line-height:14px;color:#3c3c3c;text-align:right;">24.885,60</div>
<div class="t" style="left:1180.20px;top:582.74px;width:160px;font-size:14px;line-height:14px;color:#3c3c3c;text-align:right;">423,64</div>
<div class="t" style="left:1346.20px;top:582.74px;width:160px;font-size:14px;line-height:14px;color:#3c3c3c;text-align:right;">29.215,81</div>
<div class="t" style="left:1521.20px;top:582.74px;width:160px;font-size:14px;line-height:14px;color:#3c3c3c;text-align:right;">0,00</div>
<div class="t" style="left:1690.20px;top:582.74px;width:160px;font-size:14px;line-height:14px;color:#3c3c3c;text-align:right;">23.597,33</div>
<div style="position:absolute;left:196px;top:602px;width:1660px;height:24px;background:#ffffff"></div>
<div style="position:absolute;left:66px;top:602px;width:130px;height:24px;background:linear-gradient(to right,#ffa500,#ff4500)"></div>
<div class="t" style="left:92.00px;top:606.51px;width:100px;font-size:14px;line-height:14px;color:#3c3c3c;text-align:right;">9</div>
<div class="t" style="left:194.20px;top:606.51px;width:160px;font-size:14px;line-height:14px;color:#3c3c3c;text-align:right;">-1.880,92</div>
<div class="t" style="left:360.20px;top:606.51px;width:160px;font-size:14px;line-height:14px;color:#3c3c3c;text-align:right;">25.020,24</div>
<div class="t" style="left:523.20px;top:606.51px;width:160px;font-size:14px;line-height:14px;color:#3c3c3c;text-align:right;">17.996,02</div>
<div class="t" style="left:689.20px;top:606.51px;width:160px;font-size:14px;line-height:14px;color:#3c3c3c;text-align:right;">43.085,60</div>
<div class="t" style="left:851.20px;top:606.51px;width:160px;font-size:14px;line-height:14px;color:#3c3c3c;text-align:right;">-1.899,66</div>
<div class="t" style="left:1018.20px;top:606.51px;width:160px;font-size:14px;line-height:14px;color:#3c3c3c;text-align:right;">22.985,94</div>
<div class="t" style="left:1180.20px;top:606.51px;width:160px;font-size:14px;line-height:14px;color:#3c3c3c;text-align:right;">-4.363,87</div>
<div class="t" style="left:1346.20px;top:606.51px;width:160px;font-size:14px;line-height:14px;color:#3c3c3c;text-align:right;">24.851,94</div>
<div class="t" style="left:1521.20px;top:606.51px;width:160px;font-size:14px;line-height:14px;color:#3c3c3c;text-align:right;">0,00</div>
<div class="t" style="left:1690.20px;top:606.51px;width:160px;font-size:14px;line-height:14px;color:#3c3c3c;text-align:right;">23.597,33</div>
<div style="position:absolute;left:196px;top:626px;width:1660px;height:23px;background:#f9f9f9"></div>
<div style="position:absolute;left:66px;top:626px;width:130px;height:23px;background:linear-gradient(to right,#ffa500,#ff4500)"></div>
<div class="t" style="left:92.00px;top:630.28px;width:100px;font-size:14px;line-height:14px;color:#3c3c3c;text-align:right;">10</div>
<div class="t" style="left:194.20px;top:630.28px;width:160px;font-size:14px;line-height:14px;color:#3c3c3c;text-align:right;">376,84</div>
<div class="t" style="left:360.20px;top:630.28px;width:160px;font-size:14px;line-height:14px;color:#3c3c3c;text-align:right;">25.397,08</div>
<div class="t" style="left:523.20px;top:630.28px;width:160px;font-size:14px;line-height:14px;color:#3c3c3c;text-align:right;">-2.438,06</div>
<div class="t" style="left:689.20px;top:630.28px;width:160px;font-size:14px;line-height:14px;color:#3c3c3c;text-align:right;">40.647,54</div>
<div class="t" style="left:851.20px;top:630.28px;width:160px;font-size:14px;line-height:14px;color:#3c3c3c;text-align:right;">-1.902,59</div>
<div class="t" style="left:1018.20px;top:630.28px;width:160px;font-size:14px;line-height:14px;color:#3c3c3c;text-align:right;">21.083,35</div>
<div class="t" style="left:1180.20px;top:630.28px;width:160px;font-size:14px;line-height:14px;color:#3c3c3c;text-align:right;">-2.022,35</div>
<div class="t" style="left:1346.20px;top:630.28px;width:160px;font-size:14px;line-height:14px;color:#3c3c3c;text-align:right;">22.829,59</div>
<div class="t" style="left:1521.20px;top:630.28px;width:160px;font-size:14px;line-height:14px;color:#3c3c3c;text-align:right;">0,00</div>
<div class="t" style="left:1690.20px;top:630.28px;width:160px;font-size:14px;line-height:14px;color:#3c3c3c;text-align:right;">23.597,33</div>
<div style="position:absolute;left:196px;top:649px;width:1660px;height:24px;background:#ffffff"></div>
<div style="position:absolute;left:66px;top:649px;width:130px;height:24px;background:linear-gradient(to right,#ffa500,#ff4500)"></div>
<div class="t" style="left:92.00px;top:654.05px;width:100px;font-size:14px;line-height:14px;color:#3c3c3c;text-align:right;">11</div>
<div class="t" style="left:194.20px;top:654.05px;width:160px;font-size:14px;line-height:14px;color:#3c3c3c;text-align:right;">-203,03</div>
<div class="t" style="left:360.20px;top:654.05px;width:160px;font-size:14px;line-height:14px;color:#3c3c3c;text-align:right;">25.194,05</div>
<div class="t" style="left:523.20px;top:654.05px;width:160px;font-size:14px;line-height:14px;color:#3c3c3c;text-align:right;">-8.278,79</div>
<div class="t" style="left:689.20px;top:654.05px;width:160px;font-size:14px;line-height:14px;color:#3c3c3c;text-align:right;">32.368,75</div>
<div class="t" style="left:851.20px;top:654.05px;width:160px;font-size:14px;line-height:14px;color:#3c3c3c;text-align:right;">-697,46</div>
<div class="t" style="left:1018.20px;top:654.05px;width:160px;font-size:14px;line-height:14px;color:#3c3c3c;text-align:right;">20.385,89</div>
<div class="t" style="left:1180.20px;top:654.05px;width:160px;font-size:14px;line-height:14px;color:#3c3c3c;text-align:right;">1.690,46</div>
<div class="t" style="left:1346.20px;top:654.05px;width:160px;font-size:14px;line-height:14px;color:#3c3c3c;text-align:right;">24.520,05</div>
<div class="t" style="left:1521.20px;top:654.05px;width:160px;font-size:14px;line-height:14px;color:#3c3c3c;text-align:right;">0,00</div>
<div class="t" style="left:1690.20px;top:654.05px;width:160px;font-size:14px;line-height:14px;color:#3c3c3c;text-align:right;">23.597,33</div>
<div style="position:absolute;left:196px;top:673px;width:1660px;height:24px;background:#f9f9f9"></div>
<div style="position:absolute;left:66px;top:673px;width:130px;height:24px;background:linear-gradient(to right,#ffa500,#ff4500)"></div>
<div class="t" style="left:92.00px;top:677.82px;width:100px;font-size:14px;line-height:14px;color:#3c3c3c;text-align:right;">12</div>
<div class="t" style="left:194.20px;top:677.82px;width:160px;font-size:14px;line-height:14px;color:#3c3c3c;text-align:right;">-1.310,00</div>
<div class="t" style="left:360.20px;top:677.82px;width:160px;font-size:14px;line-height:14px;color:#3c3c3c;text-align:right;">23.884,05</div>
<div class="t" style="left:523.20px;top:677.82px;width:160px;font-size:14px;line-height:14px;color:#3c3c3c;text-align:right;">-3.919,44</div>
<div class="t" style="left:689.20px;top:677.82px;width:160px;font-size:14px;line-height:14px;color:#3c3c3c;text-align:right;">28.449,31</div>
<div class="t" style="left:851.20px;top:677.82px;width:160px;font-size:14px;line-height:14px;color:#3c3c3c;text-align:right;">1.302,68</div>
<div class="t" style="left:1018.20px;top:677.82px;width:160px;font-size:14px;line-height:14px;color:#3c3c3c;text-align:right;">21.688,57</div>
<div class="t" style="left:1180.20px;top:677.82px;width:160px;font-size:14px;line-height:14px;color:#3c3c3c;text-align:right;">4.421,23</div>
<div class="t" style="left:1346.20px;top:677.82px;width:160px;font-size:14px;line-height:14px;color:#3c3c3c;text-align:right;">28.941,28</div>
<div class="t" style="left:1521.20px;top:677.82px;width:160px;font-size:14px;line-height:14px;color:#3c3c3c;text-align:right;">0,00</div>
<div class="t" style="left:1690.20px;top:677.82px;width:160px;font-size:14px;line-height:14px;color:#3c3c3c;text-align:right;">23.597,33</div>
<div style="position:absolute;left:66px;top:435px;width:130px;height:1px;background:#f4c9a6"></div>
<div style="position:absolute;left:196px;top:435px;width:1660px;height:1px;background:#e3e3e3"></div>
<div style="position:absolute;left:66px;top:459px;width:130px;height:1px;background:#f4c9a6"></div>
<div style="position:absolute;left:196px;top:459px;width:1660px;height:1px;background:#e3e3e3"></div>
<div style="position:absolute;left:66px;top:483px;width:130px;height:1px;background:#f4c9a6"></div>
<div style="position:absolute;left:196px;top:483px;width:1660px;height:1px;background:#e3e3e3"></div>
<div style="position:absolute;left:66px;top:507px;width:130px;height:1px;background:#f4c9a6"></div>
<div style="position:absolute;left:196px;top:507px;width:1660px;height:1px;background:#e3e3e3"></div>
<div style="position:absolute;left:66px;top:530px;width:130px;height:1px;background:#f4c9a6"></div>
<div style="position:absolute;left:196px;top:530px;width:1660px;height:1px;background:#e3e3e3"></div>
<div style="position:absolute;left:66px;top:554px;width:130px;height:1px;background:#f4c9a6"></div>
<div style="position:absolute;left:196px;top:554px;width:1660px;height:1px;background:#e3e3e3"></div>
<div style="position:absolute;left:66px;top:578px;width:130px;height:1px;background:#f4c9a6"></div>
<div style="position:absolute;left:196px;top:578px;width:1660px;height:1px;background:#e3e3e3"></div>
<div style="position:absolute;left:66px;top:602px;width:130px;height:1px;background:#f4c9a6"></div>
<div style="position:absolute;left:196px;top:602px;width:1660px;height:1px;background:#e3e3e3"></div>
<div style="position:absolute;left:66px;top:626px;width:130px;height:1px;background:#f4c9a6"></div>
<div style="position:absolute;left:196px;top:626px;width:1660px;height:1px;background:#e3e3e3"></div>
<div style="position:absolute;left:66px;top:649px;width:130px;height:1px;background:#f4c9a6"></div>
<div style="position:absolute;left:196px;top:649px;width:1660px;height:1px;background:#e3e3e3"></div>
<div style="position:absolute;left:66px;top:673px;width:130px;height:1px;background:#f4c9a6"></div>
<div style="position:absolute;left:196px;top:673px;width:1660px;height:1px;background:#e3e3e3"></div>
<div style="position:absolute;left:359px;top:412px;width:1px;height:285px;background:#dadada"></div>
<div style="position:absolute;left:525px;top:412px;width:1px;height:285px;background:#dadada"></div>
<div style="position:absolute;left:688px;top:412px;width:1px;height:285px;background:#dadada"></div>
<div style="position:absolute;left:854px;top:412px;width:1px;height:285px;background:#dadada"></div>
<div style="position:absolute;left:1016px;top:412px;width:1px;height:285px;background:#dadada"></div>
<div style="position:absolute;left:1183px;top:412px;width:1px;height:285px;background:#dadada"></div>
<div style="position:absolute;left:1345px;top:412px;width:1px;height:285px;background:#dadada"></div>
<div style="position:absolute;left:1511px;top:412px;width:1px;height:285px;background:#dadada"></div>
<div style="position:absolute;left:1686px;top:412px;width:1px;height:285px;background:#dadada"></div>
<div style="position:absolute;left:65px;top:361px;width:1792px;height:1px;background:#a8a8a8"></div>
<div style="position:absolute;left:66px;top:386px;width:1790px;height:1px;background:#b8b8b8"></div>
<div style="position:absolute;left:66px;top:411px;width:1790px;height:1px;background:#a8a8a8"></div>
<div style="position:absolute;left:196px;top:362px;width:1px;height:50px;background:#b8b8b8"></div>
<div style="position:absolute;left:525px;top:362px;width:1px;height:50px;background:#b8b8b8"></div>
<div style="position:absolute;left:854px;top:362px;width:1px;height:50px;background:#b8b8b8"></div>
<div style="position:absolute;left:1183px;top:362px;width:1px;height:50px;background:#b8b8b8"></div>
<div style="position:absolute;left:1511px;top:362px;width:1px;height:50px;background:#b8b8b8"></div>
<div style="position:absolute;left:359px;top:387px;width:1px;height:25px;background:#b8b8b8"></div>
<div style="position:absolute;left:688px;top:387px;width:1px;height:25px;background:#b8b8b8"></div>
<div style="position:absolute;left:1016px;top:387px;width:1px;height:25px;background:#b8b8b8"></div>
<div style="position:absolute;left:1345px;top:387px;width:1px;height:25px;background:#b8b8b8"></div>
<div style="position:absolute;left:1686px;top:387px;width:1px;height:25px;background:#b8b8b8"></div>
<div style="position:absolute;left:196px;top:412px;width:1px;height:285px;background:#c8c8c8"></div>
<div style="position:absolute;left:65px;top:361px;width:1px;height:338px;background:#a8a8a8"></div>
<div style="position:absolute;left:1855px;top:361px;width:2px;height:338px;background:#a8a8a8"></div>
<div style="position:absolute;left:65px;top:697px;width:1792px;height:2px;background:#a8a8a8"></div>
<div class="t" style="left:301.00px;top:366.87px;width:120px;font-size:13.5px;line-height:13.5px;color:#383838;text-align:center;">2013</div>
<div class="t" style="left:630.00px;top:366.87px;width:120px;font-size:13.5px;line-height:13.5px;color:#383838;text-align:center;">2014</div>
<div class="t" style="left:959.00px;top:366.87px;width:120px;font-size:13.5px;line-height:13.5px;color:#383838;text-align:center;">2015</div>
<div class="t" style="left:1287.50px;top:366.87px;width:120px;font-size:13.5px;line-height:13.5px;color:#383838;text-align:center;">2016</div>
<div class="t" style="left:1623.50px;top:366.87px;width:120px;font-size:13.5px;line-height:13.5px;color:#383838;text-align:center;">2017</div>
<div class="t" style="left:70.50px;top:392.37px;width:120px;font-size:13.5px;line-height:13.5px;color:#383838;text-align:center;">Period</div>
<div class="t" style="left:203.00px;top:392.37px;width:150px;font-size:13.5px;line-height:13.5px;color:#383838;text-align:center;">Actual</div>
<div class="t" style="left:367.50px;top:392.37px;width:150px;font-size:13.5px;line-height:13.5px;color:#383838;text-align:center;">Balance</div>
<div class="t" style="left:532.00px;top:392.37px;width:150px;font-size:13.5px;line-height:13.5px;color:#383838;text-align:center;">Actual</div>
<div class="t" style="left:696.50px;top:392.37px;width:150px;font-size:13.5px;line-height:13.5px;color:#383838;text-align:center;">Balance</div>
<div class="t" style="left:860.50px;top:392.37px;width:150px;font-size:13.5px;line-height:13.5px;color:#383838;text-align:center;">Actual</div>
<div class="t" style="left:1025.00px;top:392.37px;width:150px;font-size:13.5px;line-height:13.5px;color:#383838;text-align:center;">Balance</div>
<div class="t" style="left:1189.50px;top:392.37px;width:150px;font-size:13.5px;line-height:13.5px;color:#383838;text-align:center;">Actual</div>
<div class="t" style="left:1353.50px;top:392.37px;width:150px;font-size:13.5px;line-height:13.5px;color:#383838;text-align:center;">Balance</div>
<div class="t" style="left:1524.00px;top:392.37px;width:150px;font-size:13.5px;line-height:13.5px;color:#383838;text-align:center;">Actual</div>
<div class="t" style="left:1696.00px;top:392.37px;width:150px;font-size:13.5px;line-height:13.5px;color:#383838;text-align:center;">Balance</div>
<svg style="position:absolute;left:0;top:0" width="1914" height="1079" viewBox="0 0 1914 1079">
<rect x="65.5" y="704.5" width="1791" height="278" fill="#ffffff" stroke="#ababab" stroke-width="1"/>
<line x1="135.5" y1="934.5" x2="1708.2" y2="934.5" stroke="#e2e2e2" stroke-width="1"/>
<line x1="128.5" y1="934.5" x2="135.5" y2="934.5" stroke="#b0b0b0" stroke-width="1"/>
<line x1="135.5" y1="896.5" x2="1708.2" y2="896.5" stroke="#e2e2e2" stroke-width="1"/>
<line x1="128.5" y1="896.5" x2="135.5" y2="896.5" stroke="#b0b0b0" stroke-width="1"/>
<line x1="135.5" y1="859.5" x2="1708.2" y2="859.5" stroke="#e2e2e2" stroke-width="1"/>
<line x1="128.5" y1="859.5" x2="135.5" y2="859.5" stroke="#b0b0b0" stroke-width="1"/>
<line x1="135.5" y1="822.5" x2="1708.2" y2="822.5" stroke="#e2e2e2" stroke-width="1"/>
<line x1="128.5" y1="822.5" x2="135.5" y2="822.5" stroke="#b0b0b0" stroke-width="1"/>
<line x1="135.5" y1="785.5" x2="1708.2" y2="785.5" stroke="#e2e2e2" stroke-width="1"/>
<line x1="128.5" y1="785.5" x2="135.5" y2="785.5" stroke="#b0b0b0" stroke-width="1"/>
<line x1="135.5" y1="748.5" x2="1708.2" y2="748.5" stroke="#e2e2e2" stroke-width="1"/>
<line x1="128.5" y1="748.5" x2="135.5" y2="748.5" stroke="#b0b0b0" stroke-width="1"/>
<line x1="132" y1="921.5" x2="135.5" y2="921.5" stroke="#b0b0b0" stroke-width="1"/>
<line x1="132" y1="909.5" x2="135.5" y2="909.5" stroke="#b0b0b0" stroke-width="1"/>
<line x1="132" y1="884.5" x2="135.5" y2="884.5" stroke="#b0b0b0" stroke-width="1"/>
<line x1="132" y1="872.5" x2="135.5" y2="872.5" stroke="#b0b0b0" stroke-width="1"/>
<line x1="132" y1="847.5" x2="135.5" y2="847.5" stroke="#b0b0b0" stroke-width="1"/>
<line x1="132" y1="834.5" x2="135.5" y2="834.5" stroke="#b0b0b0" stroke-width="1"/>
<line x1="132" y1="810.5" x2="135.5" y2="810.5" stroke="#b0b0b0" stroke-width="1"/>
<line x1="132" y1="797.5" x2="135.5" y2="797.5" stroke="#b0b0b0" stroke-width="1"/>
<line x1="132" y1="772.5" x2="135.5" y2="772.5" stroke="#b0b0b0" stroke-width="1"/>
<line x1="132" y1="760.5" x2="135.5" y2="760.5" stroke="#b0b0b0" stroke-width="1"/>
<line x1="132" y1="735.5" x2="135.5" y2="735.5" stroke="#b0b0b0" stroke-width="1"/>
<line x1="132" y1="723.5" x2="135.5" y2="723.5" stroke="#b0b0b0" stroke-width="1"/>
<line x1="139.5" y1="946.3" x2="139.5" y2="949.3" stroke="#b0b0b0" stroke-width="1"/>
<line x1="152.5" y1="946.3" x2="152.5" y2="949.3" stroke="#b0b0b0" stroke-width="1"/>
<line x1="165.5" y1="946.3" x2="165.5" y2="953.3" stroke="#b0b0b0" stroke-width="1"/>
<line x1="177.5" y1="946.3" x2="177.5" y2="949.3" stroke="#b0b0b0" stroke-width="1"/>
<line x1="190.5" y1="946.3" x2="190.5" y2="949.3" stroke="#b0b0b0" stroke-width="1"/>
<line x1="202.5" y1="946.3" x2="202.5" y2="949.3" stroke="#b0b0b0" stroke-width="1"/>
<line x1="215.5" y1="946.3" x2="215.5" y2="949.3" stroke="#b0b0b0" stroke-width="1"/>
<line x1="228.5" y1="946.3" x2="228.5" y2="953.3" stroke="#b0b0b0" stroke-width="1"/>
<line x1="240.5" y1="946.3" x2="240.5" y2="949.3" stroke="#b0b0b0" stroke-width="1"/>
<line x1="253.5" y1="946.3" x2="253.5" y2="949.3" stroke="#b0b0b0" stroke-width="1"/>
<line x1="266.5" y1="946.3" x2="266.5" y2="949.3" stroke="#b0b0b0" stroke-width="1"/>
<line x1="278.5" y1="946.3" x2="278.5" y2="949.3" stroke="#b0b0b0" stroke-width="1"/>
<line x1="291.5" y1="946.3" x2="291.5" y2="953.3" stroke="#b0b0b0" stroke-width="1"/>
<line x1="303.5" y1="946.3" x2="303.5" y2="949.3" stroke="#b0b0b0" stroke-width="1"/>
<line x1="316.5" y1="946.3" x2="316.5" y2="949.3" stroke="#b0b0b0" stroke-width="1"/>
<line x1="329.5" y1="946.3" x2="329.5" y2="949.3" stroke="#b0b0b0" stroke-width="1"/>
<line x1="341.5" y1="946.3" x2="341.5" y2="949.3" stroke="#b0b0b0" stroke-width="1"/>
<line x1="354.5" y1="946.3" x2="354.5" y2="953.3" stroke="#b0b0b0" stroke-width="1"/>
<line x1="366.5" y1="946.3" x2="366.5" y2="949.3" stroke="#b0b0b0" stroke-width="1"/>
<line x1="379.5" y1="946.3" x2="379.5" y2="949.3" stroke="#b0b0b0" stroke-width="1"/>
<line x1="392.5" y1="946.3" x2="392.5" y2="949.3" stroke="#b0b0b0" stroke-width="1"/>
<line x1="404.5" y1="946.3" x2="404.5" y2="949.3" stroke="#b0b0b0" stroke-width="1"/>
<line x1="417.5" y1="946.3" x2="417.5" y2="953.3" stroke="#b0b0b0" stroke-width="1"/>
<line x1="429.5" y1="946.3" x2="429.5" y2="949.3" stroke="#b0b0b0" stroke-width="1"/>
<line x1="442.5" y1="946.3" x2="442.5" y2="949.3" stroke="#b0b0b0" stroke-width="1"/>
<line x1="455.5" y1="946.3" x2="455.5" y2="949.3" stroke="#b0b0b0" stroke-width="1"/>
<line x1="467.5" y1="946.3" x2="467.5" y2="949.3" stroke="#b0b0b0" stroke-width="1"/>
<line x1="480.5" y1="946.3" x2="480.5" y2="953.3" stroke="#b0b0b0" stroke-width="1"/>
<line x1="493.5" y1="946.3" x2="493.5" y2="949.3" stroke="#b0b0b0" stroke-width="1"/>
<line x1="505.5" y1="946.3" x2="505.5" y2="949.3" stroke="#b0b0b0" stroke-width="1"/>
<line x1="518.5" y1="946.3" x2="518.5" y2="949.3" stroke="#b0b0b0" stroke-width="1"/>
<line x1="530.5" y1="946.3" x2="530.5" y2="949.3" stroke="#b0b0b0" stroke-width="1"/>
<line x1="543.5" y1="946.3" x2="543.5" y2="953.3" stroke="#b0b0b0" stroke-width="1"/>
<line x1="556.5" y1="946.3" x2="556.5" y2="949.3" stroke="#b0b0b0" stroke-width="1"/>
<line x1="568.5" y1="946.3" x2="568.5" y2="949.3" stroke="#b0b0b0" stroke-width="1"/>
<line x1="581.5" y1="946.3" x2="581.5" y2="949.3" stroke="#b0b0b0" stroke-width="1"/>
<line x1="593.5" y1="946.3" x2="593.5" y2="949.3" stroke="#b0b0b0" stroke-width="1"/>
<line x1="606.5" y1="946.3" x2="606.5" y2="953.3" stroke="#b0b0b0" stroke-width="1"/>
<line x1="619.5" y1="946.3" x2="619.5" y2="949.3" stroke="#b0b0b0" stroke-width="1"/>
<line x1="631.5" y1="946.3" x2="631.5" y2="949.3" stroke="#b0b0b0" stroke-width="1"/>
<line x1="644.5" y1="946.3" x2="644.5" y2="949.3" stroke="#b0b0b0" stroke-width="1"/>
<line x1="656.5" y1="946.3" x2="656.5" y2="949.3" stroke="#b0b0b0" stroke-width="1"/>
<line x1="669.5" y1="946.3" x2="669.5" y2="953.3" stroke="#b0b0b0" stroke-width="1"/>
<line x1="682.5" y1="946.3" x2="682.5" y2="949.3" stroke="#b0b0b0" stroke-width="1"/>
<line x1="694.5" y1="946.3" x2="694.5" y2="949.3" stroke="#b0b0b0" stroke-width="1"/>
<line x1="707.5" y1="946.3" x2="707.5" y2="949.3" stroke="#b0b0b0" stroke-width="1"/>
<line x1="719.5" y1="946.3" x2="719.5" y2="949.3" stroke="#b0b0b0" stroke-width="1"/>
<line x1="732.5" y1="946.3" x2="732.5" y2="953.3" stroke="#b0b0b0" stroke-width="1"/>
<line x1="745.5" y1="946.3" x2="745.5" y2="949.3" stroke="#b0b0b0" stroke-width="1"/>
<line x1="757.5" y1="946.3" x2="757.5" y2="949.3" stroke="#b0b0b0" stroke-width="1"/>
<line x1="770.5" y1="946.3" x2="770.5" y2="949.3" stroke="#b0b0b0" stroke-width="1"/>
<line x1="783.5" y1="946.3" x2="783.5" y2="949.3" stroke="#b0b0b0" stroke-width="1"/>
<line x1="795.5" y1="946.3" x2="795.5" y2="953.3" stroke="#b0b0b0" stroke-width="1"/>
<line x1="808.5" y1="946.3" x2="808.5" y2="949.3" stroke="#b0b0b0" stroke-width="1"/>
<line x1="820.5" y1="946.3" x2="820.5" y2="949.3" stroke="#b0b0b0" stroke-width="1"/>
<line x1="833.5" y1="946.3" x2="833.5" y2="949.3" stroke="#b0b0b0" stroke-width="1"/>
<line x1="846.5" y1="946.3" x2="846.5" y2="949.3" stroke="#b0b0b0" stroke-width="1"/>
<line x1="858.5" y1="946.3" x2="858.5" y2="953.3" stroke="#b0b0b0" stroke-width="1"/>
<line x1="871.5" y1="946.3" x2="871.5" y2="949.3" stroke="#b0b0b0" stroke-width="1"/>
<line x1="883.5" y1="946.3" x2="883.5" y2="949.3" stroke="#b0b0b0" stroke-width="1"/>
<line x1="896.5" y1="946.3" x2="896.5" y2="949.3" stroke="#b0b0b0" stroke-width="1"/>
<line x1="909.5" y1="946.3" x2="909.5" y2="949.3" stroke="#b0b0b0" stroke-width="1"/>
<line x1="921.5" y1="946.3" x2="921.5" y2="953.3" stroke="#b0b0b0" stroke-width="1"/>
<line x1="934.5" y1="946.3" x2="934.5" y2="949.3" stroke="#b0b0b0" stroke-width="1"/>
<line x1="946.5" y1="946.3" x2="946.5" y2="949.3" stroke="#b0b0b0" stroke-width="1"/>
<line x1="959.5" y1="946.3" x2="959.5" y2="949.3" stroke="#b0b0b0" stroke-width="1"/>
<line x1="972.5" y1="946.3" x2="972.5" y2="949.3" stroke="#b0b0b0" stroke-width="1"/>
<line x1="984.5" y1="946.3" x2="984.5" y2="953.3" stroke="#b0b0b0" stroke-width="1"/>
<line x1="997.5" y1="946.3" x2="997.5" y2="949.3" stroke="#b0b0b0" stroke-width="1"/>
<line x1="1010.5" y1="946.3" x2="1010.5" y2="949.3" stroke="#b0b0b0" stroke-width="1"/>
<line x1="1022.5" y1="946.3" x2="1022.5" y2="949.3" stroke="#b0b0b0" stroke-width="1"/>
<line x1="1035.5" y1="946.3" x2="1035.5" y2="949.3" stroke="#b0b0b0" stroke-width="1"/>
<line x1="1047.5" y1="946.3" x2="1047.5" y2="953.3" stroke="#b0b0b0" stroke-width="1"/>
<line x1="1060.5" y1="946.3" x2="1060.5" y2="949.3" stroke="#b0b0b0" stroke-width="1"/>
<line x1="1073.5" y1="946.3" x2="1073.5" y2="949.3" stroke="#b0b0b0" stroke-width="1"/>
<line x1="1085.5" y1="946.3" x2="1085.5" y2="949.3" stroke="#b0b0b0" stroke-width="1"/>
<line x1="1098.5" y1="946.3" x2="1098.5" y2="949.3" stroke="#b0b0b0" stroke-width="1"/>
<line x1="1110.5" y1="946.3" x2="1110.5" y2="953.3" stroke="#b0b0b0" stroke-width="1"/>
<line x1="1123.5" y1="946.3" x2="1123.5" y2="949.3" stroke="#b0b0b0" stroke-width="1"/>
<line x1="1136.5" y1="946.3" x2="1136.5" y2="949.3" stroke="#b0b0b0" stroke-width="1"/>
<line x1="1148.5" y1="946.3" x2="1148.5" y2="949.3" stroke="#b0b0b0" stroke-width="1"/>
<line x1="1161.5" y1="946.3" x2="1161.5" y2="949.3" stroke="#b0b0b0" stroke-width="1"/>
<line x1="1173.5" y1="946.3" x2="1173.5" y2="953.3" stroke="#b0b0b0" stroke-width="1"/>
<line x1="1186.5" y1="946.3" x2="1186.5" y2="949.3" stroke="#b0b0b0" stroke-width="1"/>
<line x1="1199.5" y1="946.3" x2="1199.5" y2="949.3" stroke="#b0b0b0" stroke-width="1"/>
<line x1="1211.5" y1="946.3" x2="1211.5" y2="949.3" stroke="#b0b0b0" stroke-width="1"/>
<line x1="1224.5" y1="946.3" x2="1224.5" y2="949.3" stroke="#b0b0b0" stroke-width="1"/>
<line x1="1237.5" y1="946.3" x2="1237.5" y2="953.3" stroke="#b0b0b0" stroke-width="1"/>
<line x1="1249.5" y1="946.3" x2="1249.5" y2="949.3" stroke="#b0b0b0" stroke-width="1"/>
<line x1="1262.5" y1="946.3" x2="1262.5" y2="949.3" stroke="#b0b0b0" stroke-width="1"/>
<line x1="1274.5" y1="946.3" x2="1274.5" y2="949.3" stroke="#b0b0b0" stroke-width="1"/>
<line x1="1287.5" y1="946.3" x2="1287.5" y2="949.3" stroke="#b0b0b0" stroke-width="1"/>
<line x1="1300.5" y1="946.3" x2="1300.5" y2="953.3" stroke="#b0b0b0" stroke-width="1"/>
<line x1="1312.5" y1="946.3" x2="1312.5" y2="949.3" stroke="#b0b0b0" stroke-width="1"/>
<line x1="1325.5" y1="946.3" x2="1325.5" y2="949.3" stroke="#b0b0b0" stroke-width="1"/>
<line x1="1337.5" y1="946.3" x2="1337.5" y2="949.3" stroke="#b0b0b0" stroke-width="1"/>
<line x1="1350.5" y1="946.3" x2="1350.5" y2="949.3" stroke="#b0b0b0" stroke-width="1"/>
<line x1="1363.5" y1="946.3" x2="1363.5" y2="953.3" stroke="#b0b0b0" stroke-width="1"/>
<line x1="1375.5" y1="946.3" x2="1375.5" y2="949.3" stroke="#b0b0b0" stroke-width="1"/>
<line x1="1388.5" y1="946.3" x2="1388.5" y2="949.3" stroke="#b0b0b0" stroke-width="1"/>
<line x1="1400.5" y1="946.3" x2="1400.5" y2="949.3" stroke="#b0b0b0" stroke-width="1"/>
<line x1="1413.5" y1="946.3" x2="1413.5" y2="949.3" stroke="#b0b0b0" stroke-width="1"/>
<line x1="1426.5" y1="946.3" x2="1426.5" y2="953.3" stroke="#b0b0b0" stroke-width="1"/>
<line x1="1438.5" y1="946.3" x2="1438.5" y2="949.3" stroke="#b0b0b0" stroke-width="1"/>
<line x1="1451.5" y1="946.3" x2="1451.5" y2="949.3" stroke="#b0b0b0" stroke-width="1"/>
<line x1="1463.5" y1="946.3" x2="1463.5" y2="949.3" stroke="#b0b0b0" stroke-width="1"/>
<line x1="1476.5" y1="946.3" x2="1476.5" y2="949.3" stroke="#b0b0b0" stroke-width="1"/>
<line x1="1489.5" y1="946.3" x2="1489.5" y2="953.3" stroke="#b0b0b0" stroke-width="1"/>
<line x1="1501.5" y1="946.3" x2="1501.5" y2="949.3" stroke="#b0b0b0" stroke-width="1"/>
<line x1="1514.5" y1="946.3" x2="1514.5" y2="949.3" stroke="#b0b0b0" stroke-width="1"/>
<line x1="1527.5" y1="946.3" x2="1527.5" y2="949.3" stroke="#b0b0b0" stroke-width="1"/>
<line x1="1539.5" y1="946.3" x2="1539.5" y2="949.3" stroke="#b0b0b0" stroke-width="1"/>
<line x1="1552.5" y1="946.3" x2="1552.5" y2="953.3" stroke="#b0b0b0" stroke-width="1"/>
<line x1="1564.5" y1="946.3" x2="1564.5" y2="949.3" stroke="#b0b0b0" stroke-width="1"/>
<line x1="1577.5" y1="946.3" x2="1577.5" y2="949.3" stroke="#b0b0b0" stroke-width="1"/>
<line x1="1590.5" y1="946.3" x2="1590.5" y2="949.3" stroke="#b0b0b0" stroke-width="1"/>
<line x1="1602.5" y1="946.3" x2="1602.5" y2="949.3" stroke="#b0b0b0" stroke-width="1"/>
<line x1="1615.5" y1="946.3" x2="1615.5" y2="953.3" stroke="#b0b0b0" stroke-width="1"/>
<line x1="1627.5" y1="946.3" x2="1627.5" y2="949.3" stroke="#b0b0b0" stroke-width="1"/>
<line x1="1640.5" y1="946.3" x2="1640.5" y2="949.3" stroke="#b0b0b0" stroke-width="1"/>
<line x1="1653.5" y1="946.3" x2="1653.5" y2="949.3" stroke="#b0b0b0" stroke-width="1"/>
<line x1="1665.5" y1="946.3" x2="1665.5" y2="949.3" stroke="#b0b0b0" stroke-width="1"/>
<line x1="1678.5" y1="946.3" x2="1678.5" y2="953.3" stroke="#b0b0b0" stroke-width="1"/>
<line x1="1690.5" y1="946.3" x2="1690.5" y2="949.3" stroke="#b0b0b0" stroke-width="1"/>
<line x1="1703.5" y1="946.3" x2="1703.5" y2="949.3" stroke="#b0b0b0" stroke-width="1"/>
<rect x="135.5" y="718.5" width="1572" height="228" fill="none" stroke="#bdbdbd" stroke-width="1"/>
<line x1="132" y1="946.5" x2="1708" y2="946.5" stroke="#c4c4c4" stroke-width="1"/>
<polyline points="228.2,896.5 354.3,879.9 480.4,901.7 606.5,912.6 732.6,906.4 858.7,898.6 984.8,884.9 1110.9,906.6 1237.0,904.2 1363.1,895.8 1489.2,898.0 1615.3,902.1" fill="none" stroke="#3a80d2" stroke-width="2.4" stroke-linejoin="round"/>
<polyline points="228.2,786.9 354.3,769.6 480.4,774.0 606.5,789.4 732.6,798.6 858.7,800.0 984.8,787.7 1110.9,797.1 1237.0,804.1 1363.1,802.7 1489.2,803.5 1615.3,808.4" fill="none" stroke="#ec6e2c" stroke-width="2.4" stroke-linejoin="round"/>
<polyline points="228.2,909.4 354.3,862.6 480.4,903.7 606.5,912.8 732.6,898.9 858.7,896.2 984.8,891.9 1110.9,897.6 1237.0,830.3 1363.1,906.3 1489.2,928.0 1615.3,911.8" fill="none" stroke="#7c7c7c" stroke-width="2.4" stroke-linejoin="round"/>
<polyline points="228.2,820.6 354.3,785.9 480.4,792.4 606.5,808.0 732.6,809.7 858.7,808.8 984.8,803.5 1110.9,803.9 1237.0,736.9 1363.1,746.0 1489.2,776.8 1615.3,791.4" fill="none" stroke="#e6a70c" stroke-width="2.4" stroke-linejoin="round"/>
<polyline points="228.2,897.9 354.3,907.1 480.4,903.8 606.5,904.2 732.6,903.1 858.7,860.9 984.8,886.4 1110.9,927.5 1237.0,904.3 1363.1,904.3 1489.2,899.8 1615.3,892.4" fill="none" stroke="#3559b0" stroke-width="2.4" stroke-linejoin="round"/>
<polyline points="228.2,792.0 354.3,801.9 480.4,808.5 606.5,815.5 732.6,821.4 858.7,785.1 984.8,774.3 1110.9,804.6 1237.0,811.7 1363.1,818.8 1489.2,821.4 1615.3,816.5" fill="none" stroke="#62a040" stroke-width="2.4" stroke-linejoin="round"/>
<polyline points="228.2,887.4 354.3,884.4 480.4,895.5 606.5,895.3 732.6,901.3 858.7,876.9 984.8,913.2 1110.9,895.6 1237.0,913.4 1363.1,904.7 1489.2,890.9 1615.3,880.8" fill="none" stroke="#a8c8ee" stroke-width="2.4" stroke-linejoin="round"/>
<polyline points="228.2,806.7 354.3,793.9 480.4,792.2 606.5,790.3 732.6,794.4 858.7,774.1 984.8,790.1 1110.9,788.5 1237.0,804.8 1363.1,812.3 1489.2,806.0 1615.3,789.5" fill="none" stroke="#f6bd9f" stroke-width="2.4" stroke-linejoin="round"/>
<polyline points="228.2,907.4 354.3,875.1 480.4,899.6 606.5,904.8 732.6,928.3 858.7,890.0 984.8,895.1 1110.9,897.2 1237.0,897.2 1363.1,897.2 1489.2,897.2 1615.3,897.2" fill="none" stroke="#c8c8c8" stroke-width="2.4" stroke-linejoin="round"/>
<polyline points="228.2,799.8 354.3,777.7 480.4,780.1 606.5,787.7 732.6,818.7 858.7,811.5 984.8,809.4 1110.9,809.4 1237.0,809.4 1363.1,809.4 1489.2,809.4 1615.3,809.4" fill="none" stroke="#fdd87c" stroke-width="2.4" stroke-linejoin="round"/>
<circle cx="1237.0" cy="904.0" r="9" fill="#3a80d2"/>
<circle cx="1237.0" cy="803.9" r="9" fill="#ec6e2c"/>
<circle cx="1237.0" cy="830.1" r="9" fill="#7c7c7c"/>
<circle cx="1237.0" cy="736.7" r="9" fill="#e6a70c"/>
<circle cx="1237.0" cy="904.1" r="9" fill="#3559b0"/>
<circle cx="1237.0" cy="811.5" r="9" fill="#62a040"/>
<circle cx="1237.0" cy="913.2" r="9" fill="#a8c8ee"/>
<circle cx="1237.0" cy="804.6" r="9" fill="#f6bd9f"/>
<circle cx="1237.0" cy="897.0" r="9" fill="#c8c8c8"/>
<circle cx="1237.0" cy="809.2" r="9" fill="#fdd87c"/>
<line x1="1253" y1="717.7" x2="1253" y2="946.3" stroke="#e055e0" stroke-width="1.6"/>
</svg>
<div class="t" style="left:21.80px;top:741.07px;width:100px;font-size:13.5px;line-height:13.5px;color:#2e8b2e;text-align:right;">+40000</div>
<div class="t" style="left:21.80px;top:778.27px;width:100px;font-size:13.5px;line-height:13.5px;color:#2e8b2e;text-align:right;">+30000</div>
<div class="t" style="left:21.80px;top:815.47px;width:100px;font-size:13.5px;line-height:13.5px;color:#2e8b2e;text-align:right;">+20000</div>
<div class="t" style="left:21.80px;top:852.67px;width:100px;font-size:13.5px;line-height:13.5px;color:#2e8b2e;text-align:right;">+10000</div>
<div class="t" style="left:21.80px;top:889.87px;width:100px;font-size:13.5px;line-height:13.5px;color:#3c3c3c;text-align:right;">0</div>
<div class="t" style="left:21.80px;top:927.07px;width:100px;font-size:13.5px;line-height:13.5px;color:#ff1a1a;text-align:right;">-10000</div>
<div class="t" style="left:134.35px;top:959.57px;width:60px;font-size:13.5px;line-height:13.5px;color:#383838;text-align:center;">0,5</div>
<div class="t" style="left:197.40px;top:959.57px;width:60px;font-size:13.5px;line-height:13.5px;color:#383838;text-align:center;">1</div>
<div class="t" style="left:260.45px;top:959.57px;width:60px;font-size:13.5px;line-height:13.5px;color:#383838;text-align:center;">1,5</div>
<div class="t" style="left:323.50px;top:959.57px;width:60px;font-size:13.5px;line-height:13.5px;color:#383838;text-align:center;">2</div>
<div class="t" style="left:386.55px;top:959.57px;width:60px;font-size:13.5px;line-height:13.5px;color:#383838;text-align:center;">2,5</div>
<div class="t" style="left:449.60px;top:959.57px;width:60px;font-size:13.5px;line-height:13.5px;color:#383838;text-align:center;">3</div>
<div class="t" style="left:512.65px;top:959.57px;width:60px;font-size:13.5px;line-height:13.5px;color:#383838;text-align:center;">3,5</div>
<div class="t" style="left:575.70px;top:959.57px;width:60px;font-size:13.5px;line-height:13.5px;color:#383838;text-align:center;">4</div>
<div class="t" style="left:638.75px;top:959.57px;width:60px;font-size:13.5px;line-height:13.5px;color:#383838;text-align:center;">4,5</div>
<div class="t" style="left:701.80px;top:959.57px;width:60px;font-size:13.5px;line-height:13.5px;color:#383838;text-align:center;">5</div>
<div class="t" style="left:764.85px;top:959.57px;width:60px;font-size:13.5px;line-height:13.5px;color:#383838;text-align:center;">5,5</div>
<div class="t" style="left:827.90px;top:959.57px;width:60px;font-size:13.5px;line-height:13.5px;color:#383838;text-align:center;">6</div>
<div class="t" style="left:890.95px;top:959.57px;width:60px;font-size:13.5px;line-height:13.5px;color:#383838;text-align:center;">6,5</div>
<div class="t" style="left:954.00px;top:959.57px;width:60px;font-size:13.5px;line-height:13.5px;color:#383838;text-align:center;">7</div>
<div class="t" style="left:1017.05px;top:959.57px;width:60px;font-size:13.5px;line-height:13.5px;color:#383838;text-align:center;">7,5</div>
<div class="t" style="left:1080.10px;top:959.57px;width:60px;font-size:13.5px;line-height:13.5px;color:#383838;text-align:center;">8</div>
<div class="t" style="left:1143.15px;top:959.57px;width:60px;font-size:13.5px;line-height:13.5px;color:#383838;text-align:center;">8,5</div>
<div class="t" style="left:1206.20px;top:959.57px;width:60px;font-size:13.5px;line-height:13.5px;color:#383838;text-align:center;">9</div>
<div class="t" style="left:1269.25px;top:959.57px;width:60px;font-size:13.5px;line-height:13.5px;color:#383838;text-align:center;">9,5</div>
<div class="t" style="left:1332.30px;top:959.57px;width:60px;font-size:13.5px;line-height:13.5px;color:#383838;text-align:center;">10</div>
<div class="t" style="left:1395.35px;top:959.57px;width:60px;font-size:13.5px;line-height:13.5px;color:#383838;text-align:center;">10,5</div>
<div class="t" style="left:1458.40px;top:959.57px;width:60px;font-size:13.5px;line-height:13.5px;color:#383838;text-align:center;">11</div>
<div class="t" style="left:1521.45px;top:959.57px;width:60px;font-size:13.5px;line-height:13.5px;color:#383838;text-align:center;">11,5</div>
<div class="t" style="left:1584.50px;top:959.57px;width:60px;font-size:13.5px;line-height:13.5px;color:#383838;text-align:center;">12</div>
<div class="t" style="left:1647.55px;top:959.57px;width:60px;font-size:13.5px;line-height:13.5px;color:#383838;text-align:center;">12,5</div>
<div style="position:absolute;left:1721px;top:718px;width:123px;height:229px;box-sizing:border-box;border:1px solid #c4c4c4;background:#ffffff"></div>
<svg style="position:absolute;left:1729px;top:722.6px" width="18" height="18" viewBox="0 0 18 18">
<rect x="0.8" y="0.8" width="16.8" height="16.6" fill="#ffffff" stroke="#3a80d2" stroke-width="1.6" stroke-opacity="0.85"/>
<path d="M5 9.6 L7.9 12.4 L12.6 6.4" fill="none" stroke="#3a80d2" stroke-width="2.7" stroke-linecap="round" stroke-linejoin="round"/></svg>
<div class="t" style="left:1755.00px;top:725.37px;width:400px;font-size:13.5px;line-height:13.5px;color:#383838;text-align:left;">2013 Actual</div>
<svg style="position:absolute;left:1729px;top:745.1px" width="18" height="18" viewBox="0 0 18 18">
<rect x="0.8" y="0.8" width="16.8" height="16.6" fill="#ffffff" stroke="#ec6e2c" stroke-width="1.6" stroke-opacity="0.85"/>
<path d="M5 9.6 L7.9 12.4 L12.6 6.4" fill="none" stroke="#ec6e2c" stroke-width="2.7" stroke-linecap="round" stroke-linejoin="round"/></svg>
<div class="t" style="left:1755.00px;top:747.82px;width:400px;font-size:13.5px;line-height:13.5px;color:#383838;text-align:left;">2013 Balance</div>
<svg style="position:absolute;left:1729px;top:767.5px" width="18" height="18" viewBox="0 0 18 18">
<rect x="0.8" y="0.8" width="16.8" height="16.6" fill="#ffffff" stroke="#7c7c7c" stroke-width="1.6" stroke-opacity="0.85"/>
<path d="M5 9.6 L7.9 12.4 L12.6 6.4" fill="none" stroke="#7c7c7c" stroke-width="2.7" stroke-linecap="round" stroke-linejoin="round"/></svg>
<div class="t" style="left:1755.00px;top:770.27px;width:400px;font-size:13.5px;line-height:13.5px;color:#383838;text-align:left;">2014 Actual</div>
<svg style="position:absolute;left:1729px;top:790.0px" width="18" height="18" viewBox="0 0 18 18">
<rect x="0.8" y="0.8" width="16.8" height="16.6" fill="#ffffff" stroke="#e6a70c" stroke-width="1.6" stroke-opacity="0.85"/>
<path d="M5 9.6 L7.9 12.4 L12.6 6.4" fill="none" stroke="#e6a70c" stroke-width="2.7" stroke-linecap="round" stroke-linejoin="round"/></svg>
<div class="t" style="left:1755.00px;top:792.72px;width:400px;font-size:13.5px;line-height:13.5px;color:#383838;text-align:left;">2014 Balance</div>
<svg style="position:absolute;left:1729px;top:812.4px" width="18" height="18" viewBox="0 0 18 18">
<rect x="0.8" y="0.8" width="16.8" height="16.6" fill="#ffffff" stroke="#3559b0" stroke-width="1.6" stroke-opacity="0.85"/>
<path d="M5 9.6 L7.9 12.4 L12.6 6.4" fill="none" stroke="#3559b0" stroke-width="2.7" stroke-linecap="round" stroke-linejoin="round"/></svg>
<div class="t" style="left:1755.00px;top:815.17px;width:400px;font-size:13.5px;line-height:13.5px;color:#383838;text-align:left;">2015 Actual</div>
<svg style="position:absolute;left:1729px;top:834.9px" width="18" height="18" viewBox="0 0 18 18">
<rect x="0.8" y="0.8" width="16.8" height="16.6" fill="#ffffff" stroke="#62a040" stroke-width="1.6" stroke-opacity="0.85"/>
<path d="M5 9.6 L7.9 12.4 L12.6 6.4" fill="none" stroke="#62a040" stroke-width="2.7" stroke-linecap="round" stroke-linejoin="round"/></svg>
<div class="t" style="left:1755.00px;top:837.62px;width:400px;font-size:13.5px;line-height:13.5px;color:#383838;text-align:left;">2015 Balance</div>
<svg style="position:absolute;left:1729px;top:857.3px" width="18" height="18" viewBox="0 0 18 18">
<rect x="0.8" y="0.8" width="16.8" height="16.6" fill="#ffffff" stroke="#a8c8ee" stroke-width="1.6" stroke-opacity="0.85"/>
<path d="M5 9.6 L7.9 12.4 L12.6 6.4" fill="none" stroke="#a8c8ee" stroke-width="2.7" stroke-linecap="round" stroke-linejoin="round"/></svg>
<div class="t" style="left:1755.00px;top:860.07px;width:400px;font-size:13.5px;line-height:13.5px;color:#383838;text-align:left;">2016 Actual</div>
<svg style="position:absolute;left:1729px;top:879.8px" width="18" height="18" viewBox="0 0 18 18">
<rect x="0.8" y="0.8" width="16.8" height="16.6" fill="#ffffff" stroke="#f6bd9f" stroke-width="1.6" stroke-opacity="0.85"/>
<path d="M5 9.6 L7.9 12.4 L12.6 6.4" fill="none" stroke="#f6bd9f" stroke-width="2.7" stroke-linecap="round" stroke-linejoin="round"/></svg>
<div class="t" style="left:1755.00px;top:882.52px;width:400px;font-size:13.5px;line-height:13.5px;color:#383838;text-align:left;">2016 Balance</div>
<svg style="position:absolute;left:1729px;top:902.2px" width="18" height="18" viewBox="0 0 18 18">
<rect x="0.8" y="0.8" width="16.8" height="16.6" fill="#ffffff" stroke="#c8c8c8" stroke-width="1.6" stroke-opacity="0.85"/>
<path d="M5 9.6 L7.9 12.4 L12.6 6.4" fill="none" stroke="#c8c8c8" stroke-width="2.7" stroke-linecap="round" stroke-linejoin="round"/></svg>
<div class="t" style="left:1755.00px;top:904.97px;width:400px;font-size:13.5px;line-height:13.5px;color:#383838;text-align:left;">2017 Actual</div>
<svg style="position:absolute;left:1729px;top:924.6px" width="18" height="18" viewBox="0 0 18 18">
<rect x="0.8" y="0.8" width="16.8" height="16.6" fill="#ffffff" stroke="#fdd87c" stroke-width="1.6" stroke-opacity="0.85"/>
<path d="M5 9.6 L7.9 12.4 L12.6 6.4" fill="none" stroke="#fdd87c" stroke-width="2.7" stroke-linecap="round" stroke-linejoin="round"/></svg>
<div class="t" style="left:1755.00px;top:927.42px;width:400px;font-size:13.5px;line-height:13.5px;color:#383838;text-align:left;">2017 Balance</div>
<div style="position:absolute;left:1268px;top:704px;width:216px;height:279px;overflow:hidden">
<div style="position:absolute;left:0;top:0;width:214px;height:300px;border:1px solid #9a9a9a;border-radius:4px;background:#ffffff"></div>
</div>
<div class="t" style="left:1356.00px;top:719.57px;width:40px;font-size:13.5px;line-height:13.5px;color:#383838;text-align:center;">9</div>
<div style="position:absolute;left:1282px;top:750px;width:20px;height:1px;background:#3a80d2"></div>
<div class="t" style="left:1306.60px;top:744.37px;width:400px;font-size:13.5px;line-height:13.5px;color:#383838;text-align:left;">Year 1 Actual : -1880,92</div>
<div style="position:absolute;left:1282px;top:775px;width:20px;height:1px;background:#ec6e2c"></div>
<div class="t" style="left:1306.60px;top:769.37px;width:400px;font-size:13.5px;line-height:13.5px;color:#383838;text-align:left;">Year 1 Balance : 25020,24</div>
<div style="position:absolute;left:1282px;top:800px;width:20px;height:1px;background:#7c7c7c"></div>
<div class="t" style="left:1306.60px;top:794.37px;width:400px;font-size:13.5px;line-height:13.5px;color:#383838;text-align:left;">Year 2 Actual : 17996,02</div>
<div style="position:absolute;left:1282px;top:825px;width:20px;height:1px;background:#e6a70c"></div>
<div class="t" style="left:1306.60px;top:819.37px;width:400px;font-size:13.5px;line-height:13.5px;color:#383838;text-align:left;">Year 2 Balance : 43085,6</div>
<div style="position:absolute;left:1282px;top:850px;width:20px;height:1px;background:#3559b0"></div>
<div class="t" style="left:1306.60px;top:844.37px;width:400px;font-size:13.5px;line-height:13.5px;color:#383838;text-align:left;">Year 3 Actual : -1899,66</div>
<div style="position:absolute;left:1282px;top:875px;width:20px;height:1px;background:#62a040"></div>
<div class="t" style="left:1306.60px;top:869.37px;width:400px;font-size:13.5px;line-height:13.5px;color:#383838;text-align:left;">Year 3 Balance : 22985,94</div>
<div style="position:absolute;left:1282px;top:900px;width:20px;height:1px;background:#a8c8ee"></div>
<div class="t" style="left:1306.60px;top:894.37px;width:400px;font-size:13.5px;line-height:13.5px;color:#383838;text-align:left;">Year 4 Actual : -4363,87</div>
<div style="position:absolute;left:1282px;top:925px;width:20px;height:1px;background:#f6bd9f"></div>
<div class="t" style="left:1306.60px;top:919.37px;width:400px;font-size:13.5px;line-height:13.5px;color:#383838;text-align:left;">Year 4 Balance : 24851,94</div>
<div style="position:absolute;left:1282px;top:950px;width:20px;height:1px;background:#c8c8c8"></div>
<div class="t" style="left:1306.60px;top:944.37px;width:400px;font-size:13.5px;line-height:13.5px;color:#383838;text-align:left;">Year 5 Actual : 0</div>
<div style="position:absolute;left:1282px;top:975px;width:20px;height:1px;background:#fdd87c"></div>
<div class="t" style="left:1306.60px;top:969.37px;width:400px;font-size:13.5px;line-height:13.5px;color:#383838;text-align:left;">Year 5 Balance : 23597,33</div>
<div class="t" style="left:43.40px;top:1027.65px;width:400px;font-size:14px;line-height:14px;color:#383838;text-align:left;transform:scaleX(1.0183);transform-origin:left center;">Output</div>
<div class="t" style="left:1494.50px;top:1054.72px;width:400px;font-size:19px;line-height:19px;color:#383838;text-align:right;transform:scaleX(0.9961);transform-origin:right center;">| 7 - 2017 | SYSTEM | 1.01.0175</div>
<div style="position:absolute;left:0px;top:1077px;width:1914px;height:1px;background:#8a8a8a"></div>
<div style="position:absolute;left:0px;top:1078px;width:1914px;height:1px;background:#101010"></div>
</body></html>
